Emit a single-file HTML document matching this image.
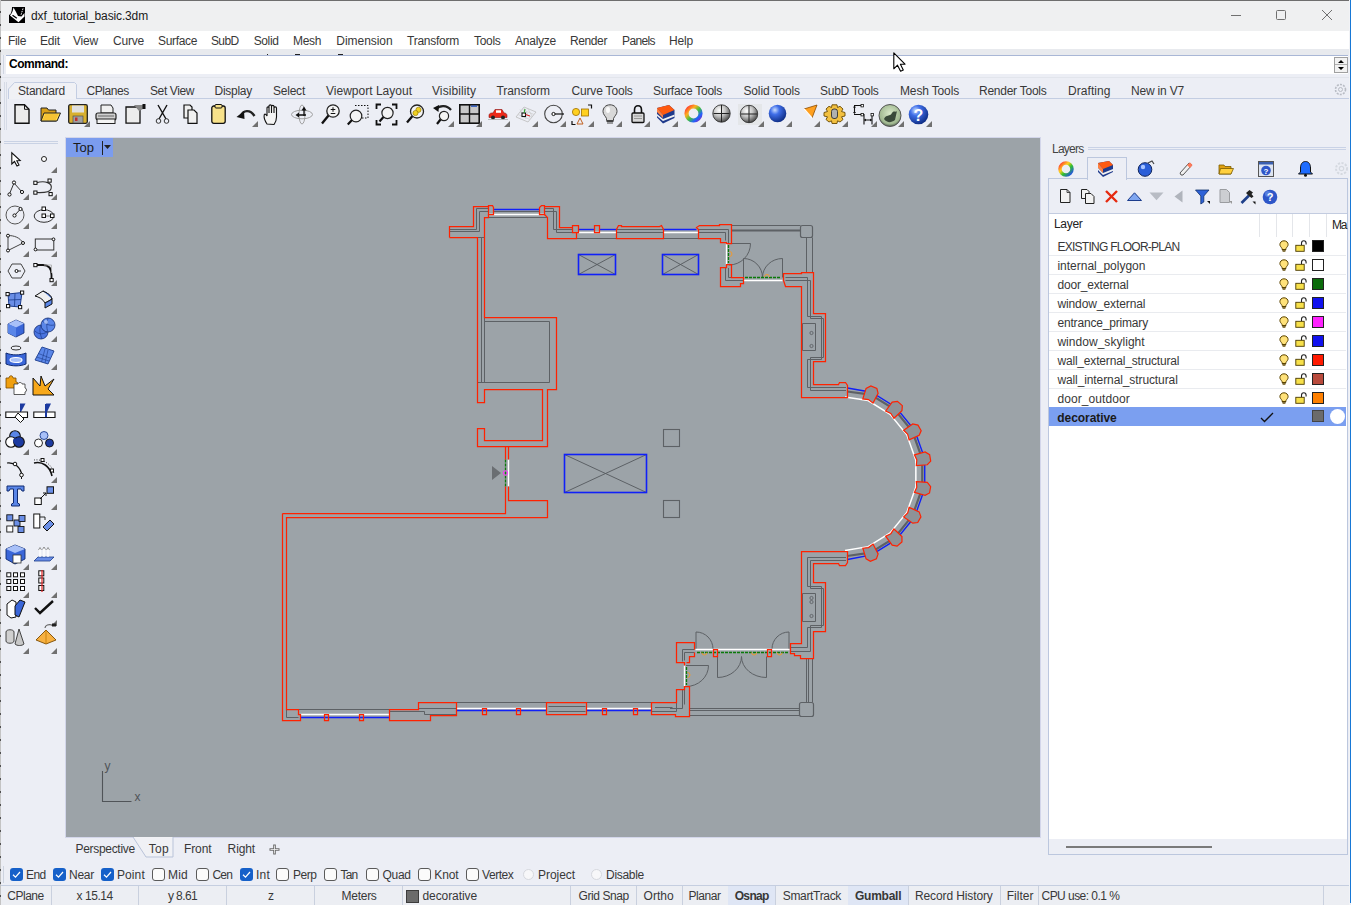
<!DOCTYPE html><html><head><meta charset="utf-8"><style>
html,body{margin:0;padding:0;width:1351px;height:905px;overflow:hidden;background:#eceef5;position:relative;font-family:"Liberation Sans",sans-serif;}
.t{position:absolute;white-space:nowrap;line-height:1;}
svg{overflow:visible}
</style></head><body>
<div style="position:absolute;left:0px;top:0px;width:1351px;height:905px;background:#eceef5;"></div>
<div style="position:absolute;left:0px;top:0px;width:1351px;height:31px;background:#eff0f1;"></div>
<div style="position:absolute;left:0px;top:0px;width:1351px;height:1px;background:#6e6e6e;"></div>
<div style="position:absolute;left:0px;top:0px;width:1px;height:905px;background:repeating-linear-gradient(to bottom,#c4c4c4 0px,#c4c4c4 11px,#505050 11px,#505050 13px);"></div>
<div style="position:absolute;left:1349px;top:0px;width:1px;height:905px;background:#f2f3f6;"></div>
<div style="position:absolute;left:1350px;top:0px;width:1px;height:903px;background:#1778d6;"></div>
<svg style="position:absolute;left:9px;top:7px;" width="16" height="16" viewBox="0 0 16 16"><path d="M3 0 H16 V16 H0 V8 L1.5 7 C2.5 5 3 2.5 3 0 Z" fill="#000"/><path d="M4.5 0.5 C6 3 7.5 6 9 9 L12.5 9.5 L15.5 6 V9.5 L9.5 15.2 L1 8.5 L2.5 6.5 C3.5 5 4 3 4.5 0.5 Z" fill="#fff"/><path d="M3.5 8.3 L7.8 11.3" stroke="#000" stroke-width="1.3"/><path d="M14 1.5 L12 8" stroke="#fff" stroke-width="1" stroke-dasharray="1.5 1"/></svg>
<div class="t" style="left:31px;top:9.84px;font-size:12px;letter-spacing:-0.139px;color:#1a1a1a;">dxf_tutorial_basic.3dm</div>
<div style="position:absolute;left:1231px;top:15px;width:10px;height:1px;background:#707070;"></div>
<div style="position:absolute;left:1276px;top:10px;width:10px;height:10px;border:1px solid #707070;box-sizing:border-box;border-radius:1.5px;"></div>
<svg style="position:absolute;left:1321px;top:9px;" width="12" height="12" viewBox="0 0 12 12"><path d="M1 1 L11 11 M11 1 L1 11" stroke="#707070" stroke-width="1"/></svg>
<div style="position:absolute;left:1px;top:31px;width:1348px;height:18px;background:#ffffff;"></div>
<div class="t" style="left:8px;top:34.84px;font-size:12px;letter-spacing:-0.334px;color:#383838;">File</div>
<div class="t" style="left:40px;top:34.84px;font-size:12px;letter-spacing:-0.169px;color:#383838;">Edit</div>
<div class="t" style="left:73px;top:34.84px;font-size:12px;letter-spacing:-0.198px;color:#383838;">View</div>
<div class="t" style="left:113px;top:34.84px;font-size:12px;letter-spacing:-0.202px;color:#383838;">Curve</div>
<div class="t" style="left:158px;top:34.84px;font-size:12px;letter-spacing:-0.337px;color:#383838;">Surface</div>
<div class="t" style="left:211px;top:34.84px;font-size:12px;letter-spacing:-0.629px;color:#383838;">SubD</div>
<div class="t" style="left:253.7px;top:34.84px;font-size:12px;letter-spacing:-0.377px;color:#383838;">Solid</div>
<div class="t" style="left:293px;top:34.84px;font-size:12px;letter-spacing:-0.336px;color:#383838;">Mesh</div>
<div class="t" style="left:336.3px;top:34.84px;font-size:12px;letter-spacing:-0.043px;color:#383838;">Dimension</div>
<div class="t" style="left:407px;top:34.84px;font-size:12px;letter-spacing:-0.248px;color:#383838;">Transform</div>
<div class="t" style="left:474px;top:34.84px;font-size:12px;letter-spacing:-0.303px;color:#383838;">Tools</div>
<div class="t" style="left:515px;top:34.84px;font-size:12px;letter-spacing:-0.242px;color:#383838;">Analyze</div>
<div class="t" style="left:570px;top:34.84px;font-size:12px;letter-spacing:-0.393px;color:#383838;">Render</div>
<div class="t" style="left:622px;top:34.84px;font-size:12px;letter-spacing:-0.615px;color:#383838;">Panels</div>
<div class="t" style="left:669px;top:34.84px;font-size:12px;letter-spacing:-0.170px;color:#383838;">Help</div>
<div style="position:absolute;left:1px;top:49px;width:1348px;height:6px;background:#e8eaee;"></div>
<div style="position:absolute;left:6px;top:55px;width:1342px;height:19px;background:#fff;border-top:1px solid #a9b7d6;box-sizing:border-box;"></div>
<div style="position:absolute;left:3px;top:55px;width:1px;height:19px;background:#d0d6e2;"></div>
<div class="t" style="left:9px;top:57.84px;font-size:12px;font-weight:bold;letter-spacing:-0.458px;color:#000;">Command:</div>
<div style="position:absolute;left:1334px;top:57px;width:14px;height:16px;background:#f2f2f2;border:1px solid #a0a0a0;box-sizing:border-box;"></div>
<div style="position:absolute;left:1335px;top:64px;width:12px;height:1px;background:#b0b0b0;"></div>
<svg style="position:absolute;left:1336px;top:58px;" width="10" height="14" viewBox="0 0 10 14"><path d="M2 5 L5 2 L8 5 Z M2 9 L5 12 L8 9 Z" fill="#000"/></svg>
<div style="position:absolute;left:1px;top:74px;width:1348px;height:64px;background:#eceef5;"></div>
<div style="position:absolute;left:75px;top:98px;width:1274px;height:1px;background:#c3cde2;"></div>
<svg style="position:absolute;left:0px;top:80px;" width="80" height="20" viewBox="0 0 80 20"><path d="M8.5,19 V9 L14.5,2.5 H74.5 L76.5,4.5 V19" fill="#f0f1f5" stroke="#c3cde2" stroke-width="1"/></svg>
<div style="position:absolute;left:4px;top:82px;width:1px;height:48px;background:#d6dbe6;"></div>
<div style="position:absolute;left:6px;top:82px;width:1px;height:48px;background:#d6dbe6;"></div>
<div style="position:absolute;left:1px;top:77px;width:1348px;height:1px;background:#e2e5ec;"></div>
<div class="t" style="left:18px;top:84.84px;font-size:12px;letter-spacing:-0.213px;color:#383838;">Standard</div>
<div class="t" style="left:86.6px;top:84.84px;font-size:12px;letter-spacing:-0.451px;color:#383838;">CPlanes</div>
<div class="t" style="left:150px;top:84.84px;font-size:12px;letter-spacing:-0.392px;color:#383838;">Set View</div>
<div class="t" style="left:214.5px;top:84.84px;font-size:12px;letter-spacing:-0.264px;color:#383838;">Display</div>
<div class="t" style="left:273px;top:84.84px;font-size:12px;letter-spacing:-0.225px;color:#383838;">Select</div>
<div class="t" style="left:326px;top:84.84px;font-size:12px;letter-spacing:0.011px;color:#383838;">Viewport Layout</div>
<div class="t" style="left:432px;top:84.84px;font-size:12px;letter-spacing:0.087px;color:#383838;">Visibility</div>
<div class="t" style="left:496.5px;top:84.84px;font-size:12px;letter-spacing:-0.081px;color:#383838;">Transform</div>
<div class="t" style="left:571.6px;top:84.84px;font-size:12px;letter-spacing:-0.186px;color:#383838;">Curve Tools</div>
<div class="t" style="left:653px;top:84.84px;font-size:12px;letter-spacing:-0.268px;color:#383838;">Surface Tools</div>
<div class="t" style="left:743.4px;top:84.84px;font-size:12px;letter-spacing:-0.110px;color:#383838;">Solid Tools</div>
<div class="t" style="left:820px;top:84.84px;font-size:12px;letter-spacing:-0.255px;color:#383838;">SubD Tools</div>
<div class="t" style="left:900px;top:84.84px;font-size:12px;letter-spacing:-0.147px;color:#383838;">Mesh Tools</div>
<div class="t" style="left:979px;top:84.84px;font-size:12px;letter-spacing:-0.249px;color:#383838;">Render Tools</div>
<div class="t" style="left:1068px;top:84.84px;font-size:12px;letter-spacing:0.060px;color:#383838;">Drafting</div>
<div class="t" style="left:1131px;top:84.84px;font-size:12px;letter-spacing:-0.188px;color:#383838;">New in V7</div>
<svg style="position:absolute;left:1333px;top:82px;" width="15" height="15" viewBox="0 0 15 15"><circle cx="7.5" cy="7.5" r="5" fill="none" stroke="#b8bcc4" stroke-width="1.6" stroke-dasharray="2 1.2"/><circle cx="7.5" cy="7.5" r="2" fill="none" stroke="#b8bcc4" stroke-width="1"/></svg>
<div style="position:absolute;left:65px;top:137px;width:976px;height:701px;background:#d3d6ea;"></div>
<div style="position:absolute;left:66px;top:138px;width:974px;height:699px;background:#9ca3a8;"></div>
<div style="position:absolute;left:66px;top:138px;width:47px;height:19px;background:#7b9cee;"></div>
<div class="t" style="left:73px;top:141.00px;font-size:13px;letter-spacing:0.013px;color:#1a1a1a;">Top</div>
<div style="position:absolute;left:102px;top:141px;width:1px;height:14px;background:#222;"></div>
<svg style="position:absolute;left:104px;top:145px;" width="8" height="6" viewBox="0 0 8 6"><path d="M0 0 L7 0 L3.5 4 Z" fill="#222"/></svg>
<svg style="position:absolute;left:130px;top:837px" width="46" height="22" viewBox="0 0 46 22"><path d="M3 0 L16 20 L43 20 L43 0" fill="#f0f1f5" stroke="#b9c3d9" stroke-width="1"/></svg>
<div class="t" style="left:75.5px;top:842.84px;font-size:12px;letter-spacing:-0.309px;color:#383838;">Perspective</div>
<div class="t" style="left:148.8px;top:842.84px;font-size:12px;letter-spacing:0.217px;color:#383838;">Top</div>
<div class="t" style="left:184px;top:842.84px;font-size:12px;letter-spacing:-0.122px;color:#383838;">Front</div>
<div class="t" style="left:227.6px;top:842.84px;font-size:12px;letter-spacing:-0.123px;color:#383838;">Right</div>
<svg style="position:absolute;left:269px;top:843.5px;" width="11" height="11" viewBox="0 0 11 11"><path d="M5.5 0.5 V10.5 M0.5 5.5 H10.5" stroke="#6a6a6a" stroke-width="2.6"/><path d="M5.5 1.5 V9.5 M1.5 5.5 H9.5" stroke="#f4f4f4" stroke-width="0.8"/></svg>
<div style="position:absolute;left:3px;top:866px;width:1px;height:17px;background:#cdd3df;"></div>
<div style="position:absolute;left:10px;top:868px;width:13px;height:13px;background:#1560c9;border-radius:3px;"></div>
<svg style="position:absolute;left:10px;top:868px;" width="13" height="13" viewBox="0 0 13 13"><path d="M3 6.8 L5.5 9.2 L10 4" fill="none" stroke="#fff" stroke-width="1.2"/></svg>
<div class="t" style="left:26px;top:868.84px;font-size:12px;letter-spacing:-0.617px;color:#383838;">End</div>
<div style="position:absolute;left:53px;top:868px;width:13px;height:13px;background:#1560c9;border-radius:3px;"></div>
<svg style="position:absolute;left:53px;top:868px;" width="13" height="13" viewBox="0 0 13 13"><path d="M3 6.8 L5.5 9.2 L10 4" fill="none" stroke="#fff" stroke-width="1.2"/></svg>
<div class="t" style="left:69px;top:868.84px;font-size:12px;letter-spacing:-0.253px;color:#383838;">Near</div>
<div style="position:absolute;left:101px;top:868px;width:13px;height:13px;background:#1560c9;border-radius:3px;"></div>
<svg style="position:absolute;left:101px;top:868px;" width="13" height="13" viewBox="0 0 13 13"><path d="M3 6.8 L5.5 9.2 L10 4" fill="none" stroke="#fff" stroke-width="1.2"/></svg>
<div class="t" style="left:117px;top:868.84px;font-size:12px;letter-spacing:0.090px;color:#383838;">Point</div>
<div style="position:absolute;left:152px;top:868px;width:13px;height:13px;background:#fbfbfb;border:1px solid #5a5a5a;border-radius:3px;box-sizing:border-box;"></div>
<div class="t" style="left:168px;top:868.84px;font-size:12px;letter-spacing:0.221px;color:#383838;">Mid</div>
<div style="position:absolute;left:196px;top:868px;width:13px;height:13px;background:#fbfbfb;border:1px solid #5a5a5a;border-radius:3px;box-sizing:border-box;"></div>
<div class="t" style="left:212.5px;top:868.84px;font-size:12px;letter-spacing:-0.838px;color:#383838;">Cen</div>
<div style="position:absolute;left:240px;top:868px;width:13px;height:13px;background:#1560c9;border-radius:3px;"></div>
<svg style="position:absolute;left:240px;top:868px;" width="13" height="13" viewBox="0 0 13 13"><path d="M3 6.8 L5.5 9.2 L10 4" fill="none" stroke="#fff" stroke-width="1.2"/></svg>
<div class="t" style="left:256px;top:868.84px;font-size:12px;letter-spacing:0.219px;color:#383838;">Int</div>
<div style="position:absolute;left:276px;top:868px;width:13px;height:13px;background:#fbfbfb;border:1px solid #5a5a5a;border-radius:3px;box-sizing:border-box;"></div>
<div class="t" style="left:293px;top:868.84px;font-size:12px;letter-spacing:-0.462px;color:#383838;">Perp</div>
<div style="position:absolute;left:324px;top:868px;width:13px;height:13px;background:#fbfbfb;border:1px solid #5a5a5a;border-radius:3px;box-sizing:border-box;"></div>
<div class="t" style="left:340.5px;top:868.84px;font-size:12px;letter-spacing:-0.849px;color:#383838;">Tan</div>
<div style="position:absolute;left:366px;top:868px;width:13px;height:13px;background:#fbfbfb;border:1px solid #5a5a5a;border-radius:3px;box-sizing:border-box;"></div>
<div class="t" style="left:382.5px;top:868.84px;font-size:12px;letter-spacing:-0.314px;color:#383838;">Quad</div>
<div style="position:absolute;left:418px;top:868px;width:13px;height:13px;background:#fbfbfb;border:1px solid #5a5a5a;border-radius:3px;box-sizing:border-box;"></div>
<div class="t" style="left:434.3px;top:868.84px;font-size:12px;letter-spacing:-0.096px;color:#383838;">Knot</div>
<div style="position:absolute;left:466px;top:868px;width:13px;height:13px;background:#fbfbfb;border:1px solid #5a5a5a;border-radius:3px;box-sizing:border-box;"></div>
<div class="t" style="left:482px;top:868.84px;font-size:12px;letter-spacing:-0.437px;color:#383838;">Vertex</div>
<div style="position:absolute;left:523px;top:869px;width:11px;height:11px;background:#f7f7f9;border:1px solid #d6d8de;border-radius:50%;box-sizing:border-box;"></div>
<div class="t" style="left:538px;top:868.84px;font-size:12px;letter-spacing:-0.050px;color:#383838;">Project</div>
<div style="position:absolute;left:591px;top:869px;width:11px;height:11px;background:#f7f7f9;border:1px solid #d6d8de;border-radius:50%;box-sizing:border-box;"></div>
<div class="t" style="left:606px;top:868.84px;font-size:12px;letter-spacing:-0.289px;color:#383838;">Disable</div>
<div style="position:absolute;left:1px;top:885px;width:1348px;height:20px;background:#eceef3;border-top:1px solid #c5cee0;box-sizing:border-box;"></div>
<div style="position:absolute;left:51px;top:886px;width:1px;height:19px;background:#c9d0de;"></div>
<div style="position:absolute;left:138px;top:886px;width:1px;height:19px;background:#c9d0de;"></div>
<div style="position:absolute;left:226px;top:886px;width:1px;height:19px;background:#c9d0de;"></div>
<div style="position:absolute;left:314px;top:886px;width:1px;height:19px;background:#c9d0de;"></div>
<div style="position:absolute;left:402px;top:886px;width:1px;height:19px;background:#c9d0de;"></div>
<div style="position:absolute;left:570px;top:886px;width:1px;height:19px;background:#c9d0de;"></div>
<div style="position:absolute;left:636px;top:886px;width:1px;height:19px;background:#c9d0de;"></div>
<div style="position:absolute;left:682px;top:886px;width:1px;height:19px;background:#c9d0de;"></div>
<div style="position:absolute;left:728px;top:886px;width:1px;height:19px;background:#c9d0de;"></div>
<div style="position:absolute;left:775px;top:886px;width:1px;height:19px;background:#c9d0de;"></div>
<div style="position:absolute;left:848px;top:886px;width:1px;height:19px;background:#c9d0de;"></div>
<div style="position:absolute;left:908px;top:886px;width:1px;height:19px;background:#c9d0de;"></div>
<div style="position:absolute;left:1000px;top:886px;width:1px;height:19px;background:#c9d0de;"></div>
<div style="position:absolute;left:1038px;top:886px;width:1px;height:19px;background:#c9d0de;"></div>
<div style="position:absolute;left:1323px;top:886px;width:1px;height:19px;background:#c9d0de;"></div>
<div style="position:absolute;left:728px;top:886px;width:47px;height:19px;background:#dfe6f5;"></div>
<div style="position:absolute;left:848px;top:886px;width:60px;height:19px;background:#dfe6f5;"></div>
<div class="t" style="left:7.3px;top:889.84px;font-size:12px;letter-spacing:-0.493px;color:#383838;">CPlane</div>
<div class="t" style="left:76.6px;top:889.84px;font-size:12px;letter-spacing:-0.452px;color:#383838;">x 15.14</div>
<div class="t" style="left:168px;top:889.84px;font-size:12px;letter-spacing:-0.615px;color:#383838;">y 8.61</div>
<div class="t" style="left:268px;top:889.84px;font-size:12px;color:#383838;">z</div>
<div class="t" style="left:341.6px;top:889.84px;font-size:12px;letter-spacing:-0.279px;color:#383838;">Meters</div>
<div class="t" style="left:422.5px;top:889.84px;font-size:12px;letter-spacing:-0.087px;color:#383838;">decorative</div>
<div class="t" style="left:578.5px;top:889.84px;font-size:12px;letter-spacing:-0.414px;color:#383838;">Grid Snap</div>
<div class="t" style="left:643.6px;top:889.84px;font-size:12px;letter-spacing:0.018px;color:#383838;">Ortho</div>
<div class="t" style="left:688.5px;top:889.84px;font-size:12px;letter-spacing:-0.415px;color:#383838;">Planar</div>
<div class="t" style="left:734.7px;top:889.84px;font-size:12px;font-weight:bold;letter-spacing:-0.648px;color:#383838;">Osnap</div>
<div class="t" style="left:782.8px;top:889.84px;font-size:12px;letter-spacing:-0.336px;color:#383838;">SmartTrack</div>
<div class="t" style="left:855px;top:889.84px;font-size:12px;font-weight:bold;letter-spacing:-0.244px;color:#383838;">Gumball</div>
<div class="t" style="left:915px;top:889.84px;font-size:12px;letter-spacing:-0.118px;color:#383838;">Record History</div>
<div class="t" style="left:1006.8px;top:889.84px;font-size:12px;letter-spacing:-0.011px;color:#383838;">Filter</div>
<div class="t" style="left:1041.5px;top:889.84px;font-size:12px;letter-spacing:-0.541px;color:#383838;">CPU use: 0.1 %</div>
<div style="position:absolute;left:406px;top:890px;width:13px;height:13px;background:#6b6b6b;border:1px solid #3c3c3c;box-sizing:border-box;"></div>
<svg style="position:absolute;left:14px;top:104px;" width="16" height="20" viewBox="0 0 16 20"><path d="M1 0.8 H10.5 L15 5.3 V19.2 H1 Z" fill="#ececec" stroke="#111" stroke-width="1.4"/><path d="M10.5 0.8 V5.3 H15" fill="none" stroke="#111" stroke-width="1"/></svg>
<svg style="position:absolute;left:40px;top:106px;" width="21" height="16" viewBox="0 0 21 16"><path d="M1 2 H7 L8.5 4 H16 V15 H1 Z" fill="#d9a018" stroke="#222" stroke-width="1"/><path d="M4 7 H20.5 L17 15 H1 Z" fill="#ffd84a" stroke="#222" stroke-width="1"/><path d="M5 9 H18 M4 11 H17 M3 13 H16" stroke="#e8a818" stroke-width="0.8"/></svg>
<svg style="position:absolute;left:68px;top:104px;" width="20" height="20" viewBox="0 0 20 20"><rect x="0.7" y="0.7" width="18.6" height="18.6" rx="1.5" fill="#d8b030" stroke="#222" stroke-width="1.3"/><rect x="4" y="1.5" width="12" height="7" fill="#e0e0e0"/><rect x="5" y="12" width="10" height="7" fill="#a0a0a0" stroke="#444" stroke-width="0.6"/><rect x="7" y="13.5" width="2.5" height="3.5" fill="#c03030"/></svg>
<svg style="position:absolute;left:84px;top:121px" width="6" height="6" viewBox="0 0 6 6"><path d="M6 0 L6 6 L0 6 Z" fill="#707070"/></svg>
<svg style="position:absolute;left:95px;top:104px;" width="22" height="20" viewBox="0 0 22 20"><path d="M6 1 H16 L18 4 V9 H6 Z" fill="#f0f0f0" stroke="#222" stroke-width="1"/><rect x="1" y="9" width="20" height="7" rx="2" fill="#d0d0d0" stroke="#222" stroke-width="1.2"/><rect x="2" y="15" width="18" height="4.5" fill="#f4f4f4" stroke="#222" stroke-width="1"/><path d="M3 12 H19" stroke="#666" stroke-width="1"/></svg>
<svg style="position:absolute;left:125px;top:104px;" width="21" height="20" viewBox="0 0 21 20"><path d="M1 3 H12 L15 6 V19.2 H1 Z" fill="#ececec" stroke="#111" stroke-width="1.3"/><path d="M9 1 L18 1 L20 4 L14 7 Z" fill="#888"/><rect x="17.5" y="0" width="3" height="5" fill="#111"/></svg>
<svg style="position:absolute;left:155px;top:104px;" width="15" height="20" viewBox="0 0 15 20"><path d="M3 1 L11 15 M12 1 L4 15" stroke="#111" stroke-width="1.4"/><circle cx="3.5" cy="17" r="2.3" fill="none" stroke="#333" stroke-width="1"/><circle cx="11.5" cy="17" r="2.3" fill="none" stroke="#333" stroke-width="1"/></svg>
<svg style="position:absolute;left:183px;top:104px;" width="15" height="20" viewBox="0 0 15 20"><path d="M1 1 H7 L9 3 V14 H1 Z" fill="#f0f0f0" stroke="#111" stroke-width="1.2"/><path d="M5 6 H11 L14 9 V19.3 H5 Z" fill="#f0f0f0" stroke="#111" stroke-width="1.2"/></svg>
<svg style="position:absolute;left:211px;top:104px;" width="15" height="20" viewBox="0 0 15 20"><rect x="0.8" y="2" width="13.4" height="17.3" rx="2" fill="#f8e28a" stroke="#111" stroke-width="1.3"/><rect x="4" y="0.5" width="7" height="3.5" rx="1" fill="#f8e28a" stroke="#111" stroke-width="1"/></svg>
<svg style="position:absolute;left:236px;top:107px;" width="21" height="14" viewBox="0 0 21 14"><path d="M5 9 C7 3 14 2 18.5 9" fill="none" stroke="#222" stroke-width="2.4"/><path d="M0.5 10 L8 4 L8.5 12 Z" fill="#111"/></svg>
<svg style="position:absolute;left:252px;top:121px" width="6" height="6" viewBox="0 0 6 6"><path d="M6 0 L6 6 L0 6 Z" fill="#707070"/></svg>
<svg style="position:absolute;left:263px;top:104px;" width="19" height="21" viewBox="0 0 19 21"><path d="M4 20 C2 17 0.8 13 1.2 11 C1.6 9.5 3 10 4 12 V4 C4 2.5 6 2.5 6 4 V9 V2 C6 0.5 8.5 0.5 8.5 2 V9 V2.5 C8.5 1 11 1 11 2.5 V9 V4 C11 2.5 13.5 2.5 13.5 4 V13 C13.5 17 12 19 11 20.5 Z" fill="#f4f4f4" stroke="#111" stroke-width="1.1"/></svg>
<svg style="position:absolute;left:291px;top:104px;" width="22" height="21" viewBox="0 0 22 21"><ellipse cx="11" cy="10.5" rx="10.5" ry="4.3" fill="none" stroke="#999" stroke-width="0.9"/><ellipse cx="11" cy="10.5" rx="3" ry="9.5" fill="none" stroke="#999" stroke-width="0.9"/><path d="M13 4 L13 12 M8 11 L15 11" stroke="#111" stroke-width="1.3"/><path d="M10.5 6.5 L13 2.5 L15.5 6.5 Z M8 8.5 L4.5 11 L8 13.5 Z" fill="#111"/></svg>
<svg style="position:absolute;left:321px;top:104px;" width="19" height="21" viewBox="0 0 19 21"><circle cx="12" cy="7" r="6.2" fill="#f4f4f4" stroke="#222" stroke-width="1.3"/><path d="M7.5 11.5 L1 19.5" stroke="#111" stroke-width="2.3"/><path d="M12 3.2 V7.8 M9.7 5.5 H14.3 M9.7 9.5 H14.3" stroke="#111" stroke-width="1"/></svg>
<svg style="position:absolute;left:347px;top:104px;" width="22" height="21" viewBox="0 0 22 21"><path d="M8 1.5 H21 V14 H14" fill="none" stroke="#111" stroke-width="1" stroke-dasharray="1.5 1.5"/><circle cx="9" cy="12" r="5.8" fill="#f4f4f4" stroke="#222" stroke-width="1.2"/><path d="M5 16 L0.8 20.5" stroke="#111" stroke-width="2.2"/></svg>
<svg style="position:absolute;left:376px;top:104px;" width="21" height="21" viewBox="0 0 21 21"><path d="M0.5 5 V0.5 H5 M16 0.5 H20.5 V5 M20.5 16 V20.5 H16 M5 20.5 H0.5 V16" fill="none" stroke="#111" stroke-width="1.8"/><circle cx="11.5" cy="9" r="5.6" fill="#f4f4f4" stroke="#222" stroke-width="1.2"/><path d="M7.5 13 L3.5 17.5" stroke="#111" stroke-width="2.2"/></svg>
<svg style="position:absolute;left:406px;top:104px;" width="18" height="21" viewBox="0 0 18 21"><circle cx="11" cy="7.5" r="6.5" fill="#f4f4f4" stroke="#222" stroke-width="1.3"/><circle cx="12.5" cy="5.8" r="2.6" fill="#f0d020" stroke="#8a7000" stroke-width="0.6"/><circle cx="9.5" cy="9" r="2.6" fill="#f0d020" stroke="#8a7000" stroke-width="0.6"/><path d="M6.3 12.3 L1 18.5" stroke="#111" stroke-width="2.3"/></svg>
<svg style="position:absolute;left:432px;top:104px;" width="20" height="21" viewBox="0 0 20 21"><path d="M4 5 C8 1 15 1 19 6" fill="none" stroke="#222" stroke-width="2.2"/><path d="M1 4 L7 1 L6.5 8 Z" fill="#111"/><circle cx="12" cy="12" r="4.6" fill="#f4f4f4" stroke="#222" stroke-width="1.2"/><path d="M8.5 15.5 L5 20" stroke="#111" stroke-width="2.2"/></svg>
<svg style="position:absolute;left:448px;top:121px" width="6" height="6" viewBox="0 0 6 6"><path d="M6 0 L6 6 L0 6 Z" fill="#707070"/></svg>
<svg style="position:absolute;left:459px;top:104px;" width="21" height="20" viewBox="0 0 21 20"><rect x="0.8" y="0.8" width="19.4" height="18.4" fill="#c8c8c8" stroke="#111" stroke-width="1.6"/><path d="M10.5 1 V19 M1 10 H20" stroke="#111" stroke-width="1.4"/><rect x="12" y="1.5" width="6" height="1.3" fill="#2050c0"/></svg>
<svg style="position:absolute;left:476px;top:121px" width="6" height="6" viewBox="0 0 6 6"><path d="M6 0 L6 6 L0 6 Z" fill="#707070"/></svg>
<svg style="position:absolute;left:488px;top:108px;" width="20" height="12" viewBox="0 0 20 12"><path d="M1 8 C1 5 3 5 5 5 L7 1.5 H14 L16 5 C18 5 19 6 19 8 V9.5 H1 Z" fill="#ee2a1a" stroke="#8a1010" stroke-width="0.6"/><rect x="8" y="2.3" width="5" height="2.5" fill="#fff"/><circle cx="5" cy="9.5" r="2" fill="#222"/><circle cx="15" cy="9.5" r="2" fill="#222"/><path d="M0 11.5 H20" stroke="#aaa" stroke-width="0.8"/></svg>
<svg style="position:absolute;left:504px;top:121px" width="6" height="6" viewBox="0 0 6 6"><path d="M6 0 L6 6 L0 6 Z" fill="#707070"/></svg>
<svg style="position:absolute;left:515px;top:104px;" width="22" height="20" viewBox="0 0 22 20"><path d="M1 13 L9 3 L21 8 L13 18 Z" fill="none" stroke="#bbb" stroke-width="0.8"/><path d="M5 8 L17 13 M3 10.5 L15 15.5 M7 5.5 L19 10.5 M5 5.5 L11 15 M9 4 L15 14 M13 5 L17 12" stroke="#ccc" stroke-width="0.7"/><rect x="7" y="9" width="3.5" height="3.5" fill="#fff" stroke="#111" stroke-width="1.1"/><path d="M10.5 10.5 L15 12" stroke="#e02020" stroke-width="1"/><path d="M9 9 L10 5" stroke="#20a020" stroke-width="1"/></svg>
<svg style="position:absolute;left:532px;top:121px" width="6" height="6" viewBox="0 0 6 6"><path d="M6 0 L6 6 L0 6 Z" fill="#707070"/></svg>
<svg style="position:absolute;left:544px;top:104px;" width="21" height="20" viewBox="0 0 21 20"><circle cx="9.5" cy="10" r="8.8" fill="none" stroke="#444" stroke-width="1.1"/><circle cx="9.5" cy="10" r="1.6" fill="#fff" stroke="#111" stroke-width="1"/><path d="M11 10 H20" stroke="#111" stroke-width="1.2"/></svg>
<svg style="position:absolute;left:560px;top:121px" width="6" height="6" viewBox="0 0 6 6"><path d="M6 0 L6 6 L0 6 Z" fill="#707070"/></svg>
<svg style="position:absolute;left:571px;top:104px;" width="22" height="22" viewBox="0 0 22 22"><circle cx="5" cy="8" r="3.6" fill="#ffd020" stroke="#a07000" stroke-width="0.8"/><rect x="10.5" y="5" width="7" height="7" fill="#ffd020" stroke="#a07000" stroke-width="0.8"/><path d="M6 20 L9 14 L12 20 Z" fill="none" stroke="#c06020" stroke-width="1"/><path d="M17 1 H20.5 V4.5 M1 17 V20.5 H4.5" fill="none" stroke="#111" stroke-width="1.2"/></svg>
<svg style="position:absolute;left:588px;top:121px" width="6" height="6" viewBox="0 0 6 6"><path d="M6 0 L6 6 L0 6 Z" fill="#707070"/></svg>
<svg style="position:absolute;left:602px;top:104px;" width="16" height="21" viewBox="0 0 16 21"><path d="M8 0.8 C3.5 0.8 1 4 1 7.5 C1 10.5 3.5 12 4.5 14.5 V16.5 H11.5 V14.5 C12.5 12 15 10.5 15 7.5 C15 4 12.5 0.8 8 0.8 Z" fill="#d8d8d8" stroke="#444" stroke-width="1"/><path d="M4.5 17.5 H11.5 M5 19 H11" stroke="#444" stroke-width="1.2"/><ellipse cx="6" cy="6" rx="2" ry="3" fill="#fafafa"/></svg>
<svg style="position:absolute;left:616px;top:121px" width="6" height="6" viewBox="0 0 6 6"><path d="M6 0 L6 6 L0 6 Z" fill="#707070"/></svg>
<svg style="position:absolute;left:631px;top:105px;" width="14" height="18" viewBox="0 0 14 18"><path d="M3.5 8 V5 C3.5 2 5 0.8 7 0.8 C9 0.8 10.5 2 10.5 5 V8" fill="none" stroke="#111" stroke-width="1.6"/><rect x="1" y="8" width="12" height="9.5" rx="1" fill="#d8d8d8" stroke="#111" stroke-width="1.3"/><path d="M3 11 H11 M3 13.5 H11" stroke="#888" stroke-width="0.8"/></svg>
<svg style="position:absolute;left:644px;top:121px" width="6" height="6" viewBox="0 0 6 6"><path d="M6 0 L6 6 L0 6 Z" fill="#707070"/></svg>
<svg style="position:absolute;left:656px;top:104px;" width="19" height="20" viewBox="0 0 19 20"><path d="M1 4 L13 1 L18.5 6 L18.5 14 L7 19.5 L1 13.5 Z" fill="#1f3a8c"/><path d="M1 4 L13 1 L18.5 6 L7 11 Z" fill="#ff5a10"/><path d="M1 4 L7 11 L7 14 L1 8 Z" fill="#ff8040"/><path d="M1 10 L7 15 L18.5 10.5 L18.5 12.5 L7 17 L1 12 Z" fill="#f0f0f0"/></svg>
<svg style="position:absolute;left:672px;top:121px" width="6" height="6" viewBox="0 0 6 6"><path d="M6 0 L6 6 L0 6 Z" fill="#707070"/></svg>
<svg style="position:absolute;left:684px;top:104px;" width="19" height="19" viewBox="0 0 19 19"><circle cx="9.5" cy="9.5" r="7" fill="none" stroke="url(#cw2)" stroke-width="4.2"/><defs><linearGradient id="cw2" x1="0" y1="0" x2="1" y2="1"><stop offset="0" stop-color="#ff3030"/><stop offset="0.3" stop-color="#ffb020"/><stop offset="0.55" stop-color="#40c040"/><stop offset="0.8" stop-color="#2060ff"/><stop offset="1" stop-color="#8030c0"/></linearGradient></defs></svg>
<svg style="position:absolute;left:700px;top:121px" width="6" height="6" viewBox="0 0 6 6"><path d="M6 0 L6 6 L0 6 Z" fill="#707070"/></svg>
<svg style="position:absolute;left:712px;top:104px;" width="19" height="19" viewBox="0 0 19 19"><defs><radialGradient id="sg" cx="0.38" cy="0.32" r="0.75"><stop offset="0" stop-color="#ffffff"/><stop offset="0.45" stop-color="#c4c4c4"/><stop offset="1" stop-color="#3a3a3a"/></radialGradient><radialGradient id="bg" cx="0.35" cy="0.3" r="0.75"><stop offset="0" stop-color="#c8dcff"/><stop offset="0.35" stop-color="#3f6ee8"/><stop offset="1" stop-color="#0c2a80"/></radialGradient></defs><circle cx="9.5" cy="9.5" r="8.7" fill="url(#sg)" stroke="#333" stroke-width="0.9"/><path d="M1.5 9.5 H17.5 M9.5 1 V18" fill="none" stroke="#222" stroke-width="1"/></svg>
<svg style="position:absolute;left:738px;top:104px;" width="24" height="21" viewBox="0 0 24 21"><rect x="0" y="0" width="24" height="21" fill="#dcdcdc" opacity="0.45"/><circle cx="11" cy="10" r="8.7" fill="url(#sg)" stroke="#333" stroke-width="0.9"/><path d="M3 10 H19 M11 1.5 V18.5" fill="none" stroke="#222" stroke-width="1"/></svg>
<svg style="position:absolute;left:758px;top:121px" width="6" height="6" viewBox="0 0 6 6"><path d="M6 0 L6 6 L0 6 Z" fill="#707070"/></svg>
<svg style="position:absolute;left:768px;top:104px;" width="19" height="19" viewBox="0 0 19 19"><circle cx="9.5" cy="9.5" r="8.8" fill="url(#bg)"/></svg>
<svg style="position:absolute;left:786px;top:121px" width="6" height="6" viewBox="0 0 6 6"><path d="M6 0 L6 6 L0 6 Z" fill="#707070"/></svg>
<svg style="position:absolute;left:803px;top:104px;" width="15" height="15" viewBox="0 0 15 15"><path d="M1 5 L14 1 L9 14 Z" fill="#ffa020" stroke="#8a4a00" stroke-width="0.8"/><path d="M1 5 L9 14" stroke="#fff" stroke-width="1.4"/></svg>
<svg style="position:absolute;left:814px;top:121px" width="6" height="6" viewBox="0 0 6 6"><path d="M6 0 L6 6 L0 6 Z" fill="#707070"/></svg>
<svg style="position:absolute;left:823px;top:104px;" width="23" height="20" viewBox="0 0 23 20"><path d="M9 0.8 H14 L14.5 3.5 L17 2.3 L20 5 L18.5 7.5 L22 8.5 V12 L18.5 12.8 L20 15.5 L17 18 L14.5 16.8 L14 19.5 H9 L8.5 16.8 L6 18 L3 15.5 L4.5 12.8 L1 12 V8.5 L4.5 7.5 L3 5 L6 2.3 L8.5 3.5 Z" fill="#f2c040" stroke="#6a4a00" stroke-width="0.9"/><rect x="8.5" y="5" width="6" height="9.5" rx="2.5" fill="#b0b0b0" stroke="#333" stroke-width="0.9"/></svg>
<svg style="position:absolute;left:842px;top:121px" width="6" height="6" viewBox="0 0 6 6"><path d="M6 0 L6 6 L0 6 Z" fill="#707070"/></svg>
<svg style="position:absolute;left:851px;top:104px;" width="24" height="22" viewBox="0 0 24 22"><path d="M3 1.5 H10 M3 10.5 H10 M3.5 3 V9 M10 10.5 H13 V20.5 M13 16 H21 M21 10.5 V20.5" fill="none" stroke="#111" stroke-width="1.1"/><path d="M2 3.5 L3.5 1.5 L5 3.5 Z M2 8 L3.5 10 L5 8 Z M15 14.5 L13.5 16 L15 17.5 Z M19 14.5 L20.5 16 L19 17.5 Z" fill="#111"/><rect x="10" y="0.5" width="2.4" height="2.4" fill="#fff" stroke="#111" stroke-width="0.8"/><rect x="10" y="9.5" width="2.4" height="2.4" fill="#fff" stroke="#111" stroke-width="0.8"/><rect x="20" y="9.5" width="2.4" height="2.4" fill="#fff" stroke="#111" stroke-width="0.8"/></svg>
<svg style="position:absolute;left:871px;top:121px" width="6" height="6" viewBox="0 0 6 6"><path d="M6 0 L6 6 L0 6 Z" fill="#707070"/></svg>
<svg style="position:absolute;left:878px;top:104px;" width="24" height="24" viewBox="0 0 24 24"><defs><radialGradient id="gg" cx="0.5" cy="0.4" r="0.6"><stop offset="0" stop-color="#d8e8c8"/><stop offset="0.8" stop-color="#a0b890"/><stop offset="1" stop-color="#506050"/></radialGradient></defs><circle cx="12" cy="11.5" r="11" fill="url(#gg)" stroke="#555" stroke-width="1"/><path d="M6 15 C8 10 12 13 14 9 C16 6 18 9 19 7 L17 16 C13 19 9 19 6 15 Z" fill="#3a4a3a"/></svg>
<svg style="position:absolute;left:898px;top:121px" width="6" height="6" viewBox="0 0 6 6"><path d="M6 0 L6 6 L0 6 Z" fill="#707070"/></svg>
<svg style="position:absolute;left:908px;top:104px;" width="21" height="21" viewBox="0 0 21 21"><circle cx="10.5" cy="10.5" r="9.8" fill="url(#bg)"/><text x="10.5" y="16.8" font-size="16" font-weight="bold" text-anchor="middle" fill="#fff" font-family="Liberation Sans">?</text></svg>
<svg style="position:absolute;left:926px;top:121px" width="6" height="6" viewBox="0 0 6 6"><path d="M6 0 L6 6 L0 6 Z" fill="#707070"/></svg>
<div style="position:absolute;left:4px;top:141px;width:54px;height:1px;background:#c9d2e4;"></div>
<div style="position:absolute;left:4px;top:143px;width:54px;height:1px;background:#c9d2e4;"></div>
<svg style="position:absolute;left:11px;top:152px;" width="10" height="15" viewBox="0 0 10 15"><path d="M0.8 0.8 L0.8 12 L3.5 9.5 L6 14 L8 13 L5.8 8.8 L9.2 8.5 Z" fill="#fff" stroke="#111" stroke-width="1.1"/></svg>
<svg style="position:absolute;left:40px;top:155px;" width="8" height="8" viewBox="0 0 8 8"><circle cx="4" cy="4" r="2.5" fill="#fff" stroke="#222" stroke-width="1"/></svg>
<svg style="position:absolute;left:51px;top:167px" width="6" height="6" viewBox="0 0 6 6"><path d="M6 0 L6 6 L0 6 Z" fill="#707070"/></svg>
<svg style="position:absolute;left:7px;top:180px;" width="19" height="17" viewBox="0 0 19 17"><path d="M2 15 L7 3 L15 12" fill="none" stroke="#333" stroke-width="1"/><circle cx="2.5" cy="14.5" r="1.6" fill="#fff" stroke="#111"/><circle cx="7" cy="2.5" r="1.6" fill="#fff" stroke="#111"/><circle cx="15" cy="12" r="1.6" fill="#fff" stroke="#111"/></svg>
<svg style="position:absolute;left:23px;top:194px" width="6" height="6" viewBox="0 0 6 6"><path d="M6 0 L6 6 L0 6 Z" fill="#707070"/></svg>
<svg style="position:absolute;left:33px;top:178px;" width="21" height="20" viewBox="0 0 21 20"><path d="M3 5 C12 2 20 5 18 11 C17 14 12 15 3 14.5" fill="none" stroke="#333" stroke-width="1.1"/><rect x="0.8" y="3.2" width="3.2" height="3.2" fill="#fff" stroke="#111" stroke-width="1"/><rect x="15" y="1" width="3.2" height="3.2" fill="#fff" stroke="#111" stroke-width="1"/><rect x="0.8" y="13" width="3.2" height="3.2" fill="#fff" stroke="#111" stroke-width="1"/><rect x="16" y="14.5" width="3.2" height="3.2" fill="#fff" stroke="#111" stroke-width="1"/></svg>
<svg style="position:absolute;left:51px;top:194px" width="6" height="6" viewBox="0 0 6 6"><path d="M6 0 L6 6 L0 6 Z" fill="#707070"/></svg>
<svg style="position:absolute;left:5px;top:205px;" width="22" height="20" viewBox="0 0 22 20"><circle cx="10" cy="10" r="9" fill="none" stroke="#555" stroke-width="1"/><path d="M9.5 10.5 L15.5 4" stroke="#222" stroke-width="1"/><circle cx="9.5" cy="10.5" r="1.6" fill="#fff" stroke="#111"/><circle cx="15.5" cy="4" r="1.6" fill="#fff" stroke="#111"/></svg>
<svg style="position:absolute;left:23px;top:223px" width="6" height="6" viewBox="0 0 6 6"><path d="M6 0 L6 6 L0 6 Z" fill="#707070"/></svg>
<svg style="position:absolute;left:33px;top:206px;" width="22" height="19" viewBox="0 0 22 19"><ellipse cx="11" cy="10" rx="9.8" ry="6.3" fill="none" stroke="#333" stroke-width="1"/><path d="M11 10 H19" stroke="#555" stroke-width="0.8"/><rect x="9" y="1" width="3.5" height="3.5" fill="#fff" stroke="#111"/><rect x="9" y="8" width="3.5" height="3.5" fill="#fff" stroke="#111"/><rect x="17.5" y="8" width="3.5" height="3.5" fill="#fff" stroke="#111"/></svg>
<svg style="position:absolute;left:51px;top:223px" width="6" height="6" viewBox="0 0 6 6"><path d="M6 0 L6 6 L0 6 Z" fill="#707070"/></svg>
<svg style="position:absolute;left:6px;top:234px;" width="21" height="20" viewBox="0 0 21 20"><path d="M2 1.5 L2 16.5 L17 9 C14 3.5 8 1.5 2 1.5" fill="none" stroke="#444" stroke-width="1"/><circle cx="2" cy="1.7" r="1.5" fill="#fff" stroke="#111"/><circle cx="2" cy="16.5" r="1.5" fill="#fff" stroke="#111"/><circle cx="17" cy="9" r="1.5" fill="#fff" stroke="#111"/></svg>
<svg style="position:absolute;left:23px;top:251px" width="6" height="6" viewBox="0 0 6 6"><path d="M6 0 L6 6 L0 6 Z" fill="#707070"/></svg>
<svg style="position:absolute;left:34px;top:238px;" width="21" height="13" viewBox="0 0 21 13"><rect x="1.3" y="1" width="18.5" height="11" fill="none" stroke="#333" stroke-width="1"/><circle cx="1.5" cy="11.5" r="1.4" fill="#fff" stroke="#111"/><circle cx="19.5" cy="1.3" r="1.4" fill="#fff" stroke="#111"/></svg>
<svg style="position:absolute;left:51px;top:251px" width="6" height="6" viewBox="0 0 6 6"><path d="M6 0 L6 6 L0 6 Z" fill="#707070"/></svg>
<svg style="position:absolute;left:7px;top:263px;" width="19" height="16" viewBox="0 0 19 16"><path d="M1 8 L5 1 H14 L18 8 L14 15 H5 Z" fill="none" stroke="#444" stroke-width="1"/><path d="M9.5 8 H14" stroke="#333" stroke-width="1"/><circle cx="9.5" cy="8" r="1.5" fill="#fff" stroke="#111"/></svg>
<svg style="position:absolute;left:23px;top:280px" width="6" height="6" viewBox="0 0 6 6"><path d="M6 0 L6 6 L0 6 Z" fill="#707070"/></svg>
<svg style="position:absolute;left:33px;top:263px;" width="22" height="20" viewBox="0 0 22 20"><path d="M2.5 2 H10 C16 2 18.5 6 18.5 12 V17" fill="none" stroke="#111" stroke-width="1.8"/><path d="M11 2 H18.5 V10" fill="none" stroke="#aaa" stroke-width="0.8"/><rect x="0.8" y="0.5" width="3.2" height="3.2" fill="#fff" stroke="#111"/><rect x="17" y="15.5" width="3.2" height="3.2" fill="#fff" stroke="#111"/></svg>
<svg style="position:absolute;left:51px;top:280px" width="6" height="6" viewBox="0 0 6 6"><path d="M6 0 L6 6 L0 6 Z" fill="#707070"/></svg>
<svg style="position:absolute;left:5px;top:290px;" width="22" height="20" viewBox="0 0 22 20"><path d="M3 4 L17 2.5 L15 17 L4 16 Z" fill="#6a8ee6" stroke="#1c3c8c" stroke-width="1"/><path d="M10 3 L9.5 16.5 M3.5 10 L16 9.5" stroke="#1c3c8c" stroke-width="0.8"/><rect x="1" y="2.5" width="3.2" height="3.2" fill="#fff" stroke="#111"/><rect x="15.5" y="1" width="3.2" height="3.2" fill="#fff" stroke="#111"/><rect x="1.5" y="14.5" width="3.2" height="3.2" fill="#fff" stroke="#111"/><rect x="13.5" y="15.5" width="3.2" height="3.2" fill="#fff" stroke="#111"/></svg>
<svg style="position:absolute;left:23px;top:308px" width="6" height="6" viewBox="0 0 6 6"><path d="M6 0 L6 6 L0 6 Z" fill="#707070"/></svg>
<svg style="position:absolute;left:34px;top:290px;" width="20" height="19" viewBox="0 0 20 19"><path d="M1 6 L9 1 C13 3 17 5 18 9 L11 13 C9 9 5 7 1 6 Z" fill="#f0f0f0" stroke="#111" stroke-width="1"/><path d="M9 1 C13 3 17 5 18 9 L18 14 L11 18 L11 13 C13 12 17 10 18 9" fill="#5a86e8" stroke="#111" stroke-width="1"/></svg>
<svg style="position:absolute;left:51px;top:308px" width="6" height="6" viewBox="0 0 6 6"><path d="M6 0 L6 6 L0 6 Z" fill="#707070"/></svg>
<svg style="position:absolute;left:7px;top:319px;" width="18" height="19" viewBox="0 0 18 19"><path d="M1 5 L9 1 L17 4.5 L17 14 L9 18 L1 14 Z" fill="#3a66d8" stroke="#102a70" stroke-width="0.8"/><path d="M1 5 L9 1 L17 4.5 L9 8.5 Z" fill="#a8c0f8"/><path d="M1 5 L9 8.5 L9 18 L1 14 Z" fill="#5a86e8"/></svg>
<svg style="position:absolute;left:23px;top:336px" width="6" height="6" viewBox="0 0 6 6"><path d="M6 0 L6 6 L0 6 Z" fill="#707070"/></svg>
<svg style="position:absolute;left:33px;top:317px;" width="23" height="23" viewBox="0 0 23 23"><circle cx="8" cy="15" r="7" fill="#4a74e0" stroke="#102a70" stroke-width="0.8"/><circle cx="15" cy="8" r="7" fill="#5a86e8" stroke="#102a70" stroke-width="0.8"/><path d="M9 4 C13 7 16 9 21 8 M15 1 C14 6 13 10 15 15 M2 14 C5 17 9 18 14 15 M8 8 C6 12 7 17 9 22" fill="none" stroke="#1c3c8c" stroke-width="0.7"/><circle cx="13" cy="5" r="2" fill="#c0d4ff" opacity="0.7"/></svg>
<svg style="position:absolute;left:51px;top:336px" width="6" height="6" viewBox="0 0 6 6"><path d="M6 0 L6 6 L0 6 Z" fill="#707070"/></svg>
<svg style="position:absolute;left:5px;top:345px;" width="22" height="22" viewBox="0 0 22 22"><ellipse cx="11" cy="3" rx="5" ry="2" fill="none" stroke="#333" stroke-width="1"/><path d="M1 8 C7 10.5 15 10.5 21 8 V19 C15 21.5 7 21.5 1 19 Z" fill="#3a66d8" stroke="#102a70" stroke-width="1"/><ellipse cx="11" cy="15" rx="6" ry="2.5" fill="#a8c0f8" stroke="#fff" stroke-width="1.2"/></svg>
<svg style="position:absolute;left:23px;top:364px" width="6" height="6" viewBox="0 0 6 6"><path d="M6 0 L6 6 L0 6 Z" fill="#707070"/></svg>
<svg style="position:absolute;left:34px;top:346px;" width="21" height="19" viewBox="0 0 21 19"><path d="M1 14 L8 1 L20 5 L14 18 Z" fill="#5a86e8" stroke="#1c3c8c" stroke-width="0.9"/><path d="M4.5 7.5 L16 12 M11 3 L7.5 16 M14 4 L11 17 M2.5 11 L15 15" stroke="#1c3c8c" stroke-width="0.6"/></svg>
<svg style="position:absolute;left:51px;top:364px" width="6" height="6" viewBox="0 0 6 6"><path d="M6 0 L6 6 L0 6 Z" fill="#707070"/></svg>
<svg style="position:absolute;left:5px;top:374px;" width="22" height="21" viewBox="0 0 22 21"><path d="M1 4 H4 C4 1 8 1 8 4 H11 V8 C14 8 14 12 11 12 V14 H1 Z" fill="#f0a010" stroke="#7a4a00" stroke-width="0.8"/><path d="M9 10 H13 C13 8 17 8 17 10 H20 V14 C22 14 22 18 20 18 V20.5 H9 Z" fill="#fff" stroke="#333" stroke-width="0.8"/></svg>
<svg style="position:absolute;left:32px;top:375px;" width="23" height="21" viewBox="0 0 23 21"><path d="M1 3 L8 11 L9 1 L13 11 L22 4 L16 14 L22 20 H1 Z" fill="#f7a81b" stroke="#111" stroke-width="1"/></svg>
<svg style="position:absolute;left:5px;top:403px;" width="23" height="18" viewBox="0 0 23 18"><path d="M15 0.5 H20.5 L16 9 H15 Z" fill="#1c3aa0"/><path d="M0.8 9 H22.5 V14.5 H0.8 Z" fill="#fff" stroke="#111" stroke-width="1.1"/><path d="M13 10 L19 16 L15.5 19.5 L10 14 Z" fill="#fff" stroke="#111" stroke-width="1"/></svg>
<svg style="position:absolute;left:33px;top:403px;" width="23" height="15" viewBox="0 0 23 15"><path d="M13 0.5 H18 L14 9 H13 Z" fill="#1c3aa0"/><path d="M0.8 9 H22 V14.5 H0.8 Z" fill="#fff" stroke="#111" stroke-width="1.1"/><path d="M13 1 V14" stroke="#1c3aa0" stroke-width="2"/></svg>
<svg style="position:absolute;left:5px;top:430px;" width="20" height="18" viewBox="0 0 20 18"><circle cx="10" cy="6" r="5.3" fill="#5a86e8" stroke="#111" stroke-width="1.1"/><circle cx="6" cy="12" r="5.3" fill="#fff" stroke="#111" stroke-width="1.1"/><circle cx="14" cy="12" r="5.3" fill="#1c3aa0" stroke="#111" stroke-width="1.1"/><path d="M10 8 C8 9 7 11 10 14 C13 11 12 9 10 8 Z" fill="#1c3aa0"/></svg>
<svg style="position:absolute;left:23px;top:449px" width="6" height="6" viewBox="0 0 6 6"><path d="M6 0 L6 6 L0 6 Z" fill="#707070"/></svg>
<svg style="position:absolute;left:34px;top:431px;" width="20" height="17" viewBox="0 0 20 17"><circle cx="10" cy="4.5" r="4" fill="#a8c0f8" stroke="#1c3c8c" stroke-width="0.9"/><circle cx="4.5" cy="12" r="4" fill="#fff" stroke="#111" stroke-width="0.9"/><circle cx="15.5" cy="12" r="4" fill="#1c3aa0" stroke="#111" stroke-width="0.9"/></svg>
<svg style="position:absolute;left:51px;top:449px" width="6" height="6" viewBox="0 0 6 6"><path d="M6 0 L6 6 L0 6 Z" fill="#707070"/></svg>
<svg style="position:absolute;left:5px;top:460px;" width="20" height="19" viewBox="0 0 20 19"><path d="M2 3 C9 2 16 7 17 16" fill="none" stroke="#111" stroke-width="1.2"/><circle cx="10" cy="4" r="1.8" fill="#fff" stroke="#111"/><circle cx="16.5" cy="15" r="1.8" fill="#fff" stroke="#111"/><path d="M16.5 17 V19" stroke="#111"/></svg>
<svg style="position:absolute;left:33px;top:458px;" width="22" height="22" viewBox="0 0 22 22"><path d="M1 5 C9 3 17 8 19 18" fill="none" stroke="#111" stroke-width="1.6"/><path d="M1 2 C9 1 19 5 21 16" fill="none" stroke="#111" stroke-width="0.8" stroke-dasharray="1 1.5"/><rect x="8" y="0.5" width="3" height="3" fill="#fff" stroke="#111"/><rect x="17.5" y="11" width="3" height="3" fill="#fff" stroke="#111"/></svg>
<svg style="position:absolute;left:51px;top:477px" width="6" height="6" viewBox="0 0 6 6"><path d="M6 0 L6 6 L0 6 Z" fill="#707070"/></svg>
<svg style="position:absolute;left:6px;top:485px;" width="19" height="22" viewBox="0 0 19 22"><path d="M1 1 H18 V6 H16 L15 4 H11.5 V18 L13.5 19 V21 H5.5 V19 L7.5 18 V4 H4 L3 6 H1 Z" fill="#5a86e8" stroke="#102a70" stroke-width="1"/></svg>
<svg style="position:absolute;left:34px;top:486px;" width="21" height="20" viewBox="0 0 21 20"><rect x="0.8" y="12" width="6.5" height="6.5" fill="#fff" stroke="#111" stroke-width="1"/><rect x="13" y="0.8" width="6.5" height="6.5" fill="#6a8ee6" stroke="#111" stroke-width="1"/><path d="M6 13 L12 7 M9 7 H12 V10" fill="none" stroke="#111" stroke-width="1"/></svg>
<svg style="position:absolute;left:51px;top:504px" width="6" height="6" viewBox="0 0 6 6"><path d="M6 0 L6 6 L0 6 Z" fill="#707070"/></svg>
<svg style="position:absolute;left:6px;top:514px;" width="20" height="20" viewBox="0 0 20 20"><rect x="0.8" y="0.8" width="6" height="6" fill="#6a8ee6" stroke="#111" stroke-width="0.9"/><rect x="8" y="6" width="6" height="6" fill="#6a8ee6" stroke="#111" stroke-width="0.9"/><rect x="13" y="1.5" width="6" height="6" fill="#6a8ee6" stroke="#111" stroke-width="0.9"/><rect x="0.8" y="12" width="6" height="6" fill="#fff" stroke="#111" stroke-width="0.9"/><rect x="12" y="12.5" width="6" height="6" fill="#6a8ee6" stroke="#111" stroke-width="0.9"/></svg>
<svg style="position:absolute;left:33px;top:513px;" width="22" height="21" viewBox="0 0 22 21"><rect x="0.8" y="1" width="6" height="14" fill="#fff" stroke="#111" stroke-width="1"/><path d="M10 14 L17 7 L21 11 L14 18 Z" fill="#6a8ee6" stroke="#111" stroke-width="1"/><path d="M7 4 H12 L12 7" fill="none" stroke="#111" stroke-width="0.9"/></svg>
<svg style="position:absolute;left:5px;top:544px;" width="21" height="22" viewBox="0 0 21 22"><path d="M1 5 L10 1 L20 5 V15 L10 20 L1 15 Z" fill="#3a66d8" stroke="#102a70" stroke-width="0.9"/><path d="M1 5 L10 1 L20 5 L10 9 Z" fill="#a8c0f8"/><rect x="8" y="11" width="8" height="8" fill="#fff" stroke="#333" stroke-width="0.8"/></svg>
<svg style="position:absolute;left:23px;top:564px" width="6" height="6" viewBox="0 0 6 6"><path d="M6 0 L6 6 L0 6 Z" fill="#707070"/></svg>
<svg style="position:absolute;left:33px;top:546px;" width="22" height="18" viewBox="0 0 22 18"><path d="M1 15 L5 11 H21 L17 15 Z" fill="#6a8ee6" stroke="#1c3c8c" stroke-width="0.8"/><path d="M7 11 V3 M11 11 V2 M15 11 V3" stroke="#fff" stroke-width="1.4"/><path d="M5.5 4 L7 1.5 L8.5 4 M9.5 3.5 L11 1 L12.5 3.5 M13.5 4 L15 1.5 L16.5 4" fill="#fff" stroke="#333" stroke-width="0.5"/></svg>
<svg style="position:absolute;left:51px;top:564px" width="6" height="6" viewBox="0 0 6 6"><path d="M6 0 L6 6 L0 6 Z" fill="#707070"/></svg>
<svg style="position:absolute;left:6px;top:572px;" width="20" height="20" viewBox="0 0 20 20"><g fill="#fff" stroke="#111" stroke-width="1"><rect x="0.8" y="0.8" width="4" height="4"/><rect x="7.5" y="0.8" width="4" height="4"/><rect x="14.5" y="0.8" width="4" height="4"/><rect x="0.8" y="7.5" width="4" height="4"/><rect x="7.5" y="7.5" width="4" height="4"/><rect x="14.5" y="7.5" width="4" height="4"/><rect x="0.8" y="14.5" width="4" height="4"/><rect x="7.5" y="14.5" width="4" height="4"/><rect x="14.5" y="14.5" width="4" height="4"/></g></svg>
<svg style="position:absolute;left:23px;top:592px" width="6" height="6" viewBox="0 0 6 6"><path d="M6 0 L6 6 L0 6 Z" fill="#707070"/></svg>
<svg style="position:absolute;left:38px;top:570px;" width="12" height="22" viewBox="0 0 12 22"><g fill="#fff" stroke="#111" stroke-width="1"><rect x="0.8" y="0.8" width="5" height="5"/><rect x="0.8" y="8" width="5" height="5"/><rect x="0.8" y="15.5" width="5" height="5"/></g><path d="M4 0 V22" stroke="#e02020" stroke-width="1.2"/></svg>
<svg style="position:absolute;left:51px;top:592px" width="6" height="6" viewBox="0 0 6 6"><path d="M6 0 L6 6 L0 6 Z" fill="#707070"/></svg>
<svg style="position:absolute;left:6px;top:598px;" width="20" height="21" viewBox="0 0 20 21"><path d="M1 6 L6 2 L10 4 V19 L5 20 L1 17 Z" fill="#fff" stroke="#111" stroke-width="1"/><path d="M9 8 L14 2 L19 4 L13 19 L9 17 Z" fill="#3a66d8" stroke="#111" stroke-width="1"/></svg>
<svg style="position:absolute;left:23px;top:620px" width="6" height="6" viewBox="0 0 6 6"><path d="M6 0 L6 6 L0 6 Z" fill="#707070"/></svg>
<svg style="position:absolute;left:34px;top:600px;" width="20" height="15" viewBox="0 0 20 15"><path d="M1 8 L6 13 L19 1" fill="none" stroke="#111" stroke-width="2.4"/></svg>
<svg style="position:absolute;left:51px;top:620px" width="6" height="6" viewBox="0 0 6 6"><path d="M6 0 L6 6 L0 6 Z" fill="#707070"/></svg>
<svg style="position:absolute;left:5px;top:626px;" width="22" height="20" viewBox="0 0 22 20"><path d="M1 6 C1 3 9 3 9 6 V15 C9 18 1 18 1 15 Z" fill="#d0d0d0" stroke="#333" stroke-width="0.9"/><path d="M10 18 L14 3 L19 18 C17 20 12 20 10 18 Z" fill="#c8c8c8" stroke="#333" stroke-width="0.9"/></svg>
<svg style="position:absolute;left:23px;top:648px" width="6" height="6" viewBox="0 0 6 6"><path d="M6 0 L6 6 L0 6 Z" fill="#707070"/></svg>
<svg style="position:absolute;left:35px;top:623px;" width="22" height="23" viewBox="0 0 22 23"><path d="M1 17 L11 7 L21 17 L11 21 Z" fill="#f7b040" stroke="#7a4a00" stroke-width="0.9"/><path d="M11 7 L11 21" stroke="#c07800" stroke-width="0.8"/><path d="M10 5 C10 2 14 1 17 2 H21" fill="none" stroke="#666" stroke-width="1.2"/><rect x="17" y="0.5" width="4" height="3" fill="#222"/></svg>
<svg style="position:absolute;left:51px;top:648px" width="6" height="6" viewBox="0 0 6 6"><path d="M6 0 L6 6 L0 6 Z" fill="#707070"/></svg>
<div class="t" style="left:1052px;top:142.84px;font-size:12px;letter-spacing:-0.753px;color:#444;">Layers</div>
<div style="position:absolute;left:1088px;top:147px;width:258px;height:1px;background:#c9d2e6;"></div>
<div style="position:absolute;left:1088px;top:149px;width:258px;height:1px;background:#c9d2e6;"></div>
<div style="position:absolute;left:1048px;top:178px;width:300px;height:677px;background:#eceef5;border:1px solid #bcc7de;box-sizing:border-box;"></div>
<div style="position:absolute;left:1087px;top:157px;width:40px;height:23px;background:#eceef5;border:1px solid #bcc7de;border-bottom:none;box-sizing:border-box;"></div>
<div style="position:absolute;left:1049px;top:213px;width:298px;height:626px;background:#ffffff;border-top:1px solid #c3cce0;box-sizing:border-box;"></div>
<div style="position:absolute;left:1066px;top:846px;width:146px;height:2px;background:#7a7a7a;"></div>
<div class="t" style="left:1054px;top:217.84px;font-size:12px;letter-spacing:-0.304px;color:#222;">Layer</div>
<div style="position:absolute;left:1259px;top:214px;width:1px;height:23px;background:#e4e6ea;"></div>
<div style="position:absolute;left:1276px;top:214px;width:1px;height:23px;background:#e4e6ea;"></div>
<div style="position:absolute;left:1292px;top:214px;width:1px;height:23px;background:#e4e6ea;"></div>
<div style="position:absolute;left:1309px;top:214px;width:1px;height:23px;background:#e4e6ea;"></div>
<div style="position:absolute;left:1326px;top:214px;width:1px;height:23px;background:#e4e6ea;"></div>
<div class="t" style="left:1332px;top:218.84px;font-size:12px;letter-spacing:-1.335px;color:#222;">Ma</div>
<div class="t" style="left:1057.4px;top:240.84px;font-size:12px;letter-spacing:-0.733px;color:#383838;">EXISTING FLOOR-PLAN</div>
<div style="position:absolute;left:1049px;top:255px;width:297px;height:1px;background:#e9ebef;"></div>
<svg style="position:absolute;left:1278.5px;top:240px" width="10" height="12" viewBox="0 0 10 12"><path d="M5 0.8 C2.3 0.8 0.9 2.7 0.9 4.6 C0.9 6.3 2.4 7.2 3 8.5 L3 9.5 L7 9.5 L7 8.5 C7.6 7.2 9.1 6.3 9.1 4.6 C9.1 2.7 7.7 0.8 5 0.8 Z" fill="#ffe27a" stroke="#5a4300" stroke-width="1"/><path d="M3.2 10.3 H6.8 M3.6 11.3 H6.4" stroke="#5a4300" stroke-width="0.9"/></svg>
<svg style="position:absolute;left:1295px;top:239.5px" width="13" height="12" viewBox="0 0 13 12"><path d="M6.5 5.5 V3.3 C6.5 1.6 7.6 0.8 8.8 0.8 C10 0.8 11.1 1.6 11.1 3.3 V4.5" fill="none" stroke="#222" stroke-width="1.1"/><rect x="0.8" y="5.3" width="8.4" height="6" fill="#f7e04a" stroke="#4a3a00" stroke-width="0.9"/></svg>
<div style="position:absolute;left:1312px;top:240px;width:12px;height:12px;background:#000000;border:1px solid #222;box-sizing:border-box;"></div>
<div class="t" style="left:1057.4px;top:259.84px;font-size:12px;letter-spacing:-0.004px;color:#383838;">internal_polygon</div>
<div style="position:absolute;left:1049px;top:274px;width:297px;height:1px;background:#e9ebef;"></div>
<svg style="position:absolute;left:1278.5px;top:259px" width="10" height="12" viewBox="0 0 10 12"><path d="M5 0.8 C2.3 0.8 0.9 2.7 0.9 4.6 C0.9 6.3 2.4 7.2 3 8.5 L3 9.5 L7 9.5 L7 8.5 C7.6 7.2 9.1 6.3 9.1 4.6 C9.1 2.7 7.7 0.8 5 0.8 Z" fill="#ffe27a" stroke="#5a4300" stroke-width="1"/><path d="M3.2 10.3 H6.8 M3.6 11.3 H6.4" stroke="#5a4300" stroke-width="0.9"/></svg>
<svg style="position:absolute;left:1295px;top:258.5px" width="13" height="12" viewBox="0 0 13 12"><path d="M6.5 5.5 V3.3 C6.5 1.6 7.6 0.8 8.8 0.8 C10 0.8 11.1 1.6 11.1 3.3 V4.5" fill="none" stroke="#222" stroke-width="1.1"/><rect x="0.8" y="5.3" width="8.4" height="6" fill="#f7e04a" stroke="#4a3a00" stroke-width="0.9"/></svg>
<div style="position:absolute;left:1312px;top:259px;width:12px;height:12px;background:#ffffff;border:1px solid #222;box-sizing:border-box;"></div>
<div class="t" style="left:1057.4px;top:278.84px;font-size:12px;letter-spacing:-0.176px;color:#383838;">door_external</div>
<div style="position:absolute;left:1049px;top:293px;width:297px;height:1px;background:#e9ebef;"></div>
<svg style="position:absolute;left:1278.5px;top:278px" width="10" height="12" viewBox="0 0 10 12"><path d="M5 0.8 C2.3 0.8 0.9 2.7 0.9 4.6 C0.9 6.3 2.4 7.2 3 8.5 L3 9.5 L7 9.5 L7 8.5 C7.6 7.2 9.1 6.3 9.1 4.6 C9.1 2.7 7.7 0.8 5 0.8 Z" fill="#ffe27a" stroke="#5a4300" stroke-width="1"/><path d="M3.2 10.3 H6.8 M3.6 11.3 H6.4" stroke="#5a4300" stroke-width="0.9"/></svg>
<svg style="position:absolute;left:1295px;top:277.5px" width="13" height="12" viewBox="0 0 13 12"><path d="M6.5 5.5 V3.3 C6.5 1.6 7.6 0.8 8.8 0.8 C10 0.8 11.1 1.6 11.1 3.3 V4.5" fill="none" stroke="#222" stroke-width="1.1"/><rect x="0.8" y="5.3" width="8.4" height="6" fill="#f7e04a" stroke="#4a3a00" stroke-width="0.9"/></svg>
<div style="position:absolute;left:1312px;top:278px;width:12px;height:12px;background:#0a6a0a;border:1px solid #222;box-sizing:border-box;"></div>
<div class="t" style="left:1057.4px;top:297.84px;font-size:12px;letter-spacing:-0.092px;color:#383838;">window_external</div>
<div style="position:absolute;left:1049px;top:312px;width:297px;height:1px;background:#e9ebef;"></div>
<svg style="position:absolute;left:1278.5px;top:297px" width="10" height="12" viewBox="0 0 10 12"><path d="M5 0.8 C2.3 0.8 0.9 2.7 0.9 4.6 C0.9 6.3 2.4 7.2 3 8.5 L3 9.5 L7 9.5 L7 8.5 C7.6 7.2 9.1 6.3 9.1 4.6 C9.1 2.7 7.7 0.8 5 0.8 Z" fill="#ffe27a" stroke="#5a4300" stroke-width="1"/><path d="M3.2 10.3 H6.8 M3.6 11.3 H6.4" stroke="#5a4300" stroke-width="0.9"/></svg>
<svg style="position:absolute;left:1295px;top:296.5px" width="13" height="12" viewBox="0 0 13 12"><path d="M6.5 5.5 V3.3 C6.5 1.6 7.6 0.8 8.8 0.8 C10 0.8 11.1 1.6 11.1 3.3 V4.5" fill="none" stroke="#222" stroke-width="1.1"/><rect x="0.8" y="5.3" width="8.4" height="6" fill="#f7e04a" stroke="#4a3a00" stroke-width="0.9"/></svg>
<div style="position:absolute;left:1312px;top:297px;width:12px;height:12px;background:#1111ee;border:1px solid #222;box-sizing:border-box;"></div>
<div class="t" style="left:1057.4px;top:316.84px;font-size:12px;letter-spacing:-0.173px;color:#383838;">entrance_primary</div>
<div style="position:absolute;left:1049px;top:331px;width:297px;height:1px;background:#e9ebef;"></div>
<svg style="position:absolute;left:1278.5px;top:316px" width="10" height="12" viewBox="0 0 10 12"><path d="M5 0.8 C2.3 0.8 0.9 2.7 0.9 4.6 C0.9 6.3 2.4 7.2 3 8.5 L3 9.5 L7 9.5 L7 8.5 C7.6 7.2 9.1 6.3 9.1 4.6 C9.1 2.7 7.7 0.8 5 0.8 Z" fill="#ffe27a" stroke="#5a4300" stroke-width="1"/><path d="M3.2 10.3 H6.8 M3.6 11.3 H6.4" stroke="#5a4300" stroke-width="0.9"/></svg>
<svg style="position:absolute;left:1295px;top:315.5px" width="13" height="12" viewBox="0 0 13 12"><path d="M6.5 5.5 V3.3 C6.5 1.6 7.6 0.8 8.8 0.8 C10 0.8 11.1 1.6 11.1 3.3 V4.5" fill="none" stroke="#222" stroke-width="1.1"/><rect x="0.8" y="5.3" width="8.4" height="6" fill="#f7e04a" stroke="#4a3a00" stroke-width="0.9"/></svg>
<div style="position:absolute;left:1312px;top:316px;width:12px;height:12px;background:#ff22ff;border:1px solid #222;box-sizing:border-box;"></div>
<div class="t" style="left:1057.4px;top:335.84px;font-size:12px;letter-spacing:0.039px;color:#383838;">window_skylight</div>
<div style="position:absolute;left:1049px;top:350px;width:297px;height:1px;background:#e9ebef;"></div>
<svg style="position:absolute;left:1278.5px;top:335px" width="10" height="12" viewBox="0 0 10 12"><path d="M5 0.8 C2.3 0.8 0.9 2.7 0.9 4.6 C0.9 6.3 2.4 7.2 3 8.5 L3 9.5 L7 9.5 L7 8.5 C7.6 7.2 9.1 6.3 9.1 4.6 C9.1 2.7 7.7 0.8 5 0.8 Z" fill="#ffe27a" stroke="#5a4300" stroke-width="1"/><path d="M3.2 10.3 H6.8 M3.6 11.3 H6.4" stroke="#5a4300" stroke-width="0.9"/></svg>
<svg style="position:absolute;left:1295px;top:334.5px" width="13" height="12" viewBox="0 0 13 12"><path d="M6.5 5.5 V3.3 C6.5 1.6 7.6 0.8 8.8 0.8 C10 0.8 11.1 1.6 11.1 3.3 V4.5" fill="none" stroke="#222" stroke-width="1.1"/><rect x="0.8" y="5.3" width="8.4" height="6" fill="#f7e04a" stroke="#4a3a00" stroke-width="0.9"/></svg>
<div style="position:absolute;left:1312px;top:335px;width:12px;height:12px;background:#1111ee;border:1px solid #222;box-sizing:border-box;"></div>
<div class="t" style="left:1057.4px;top:354.84px;font-size:12px;letter-spacing:-0.173px;color:#383838;">wall_external_structural</div>
<div style="position:absolute;left:1049px;top:369px;width:297px;height:1px;background:#e9ebef;"></div>
<svg style="position:absolute;left:1278.5px;top:354px" width="10" height="12" viewBox="0 0 10 12"><path d="M5 0.8 C2.3 0.8 0.9 2.7 0.9 4.6 C0.9 6.3 2.4 7.2 3 8.5 L3 9.5 L7 9.5 L7 8.5 C7.6 7.2 9.1 6.3 9.1 4.6 C9.1 2.7 7.7 0.8 5 0.8 Z" fill="#ffe27a" stroke="#5a4300" stroke-width="1"/><path d="M3.2 10.3 H6.8 M3.6 11.3 H6.4" stroke="#5a4300" stroke-width="0.9"/></svg>
<svg style="position:absolute;left:1295px;top:353.5px" width="13" height="12" viewBox="0 0 13 12"><path d="M6.5 5.5 V3.3 C6.5 1.6 7.6 0.8 8.8 0.8 C10 0.8 11.1 1.6 11.1 3.3 V4.5" fill="none" stroke="#222" stroke-width="1.1"/><rect x="0.8" y="5.3" width="8.4" height="6" fill="#f7e04a" stroke="#4a3a00" stroke-width="0.9"/></svg>
<div style="position:absolute;left:1312px;top:354px;width:12px;height:12px;background:#ff1a00;border:1px solid #222;box-sizing:border-box;"></div>
<div class="t" style="left:1057.4px;top:373.84px;font-size:12px;letter-spacing:-0.101px;color:#383838;">wall_internal_structural</div>
<div style="position:absolute;left:1049px;top:388px;width:297px;height:1px;background:#e9ebef;"></div>
<svg style="position:absolute;left:1278.5px;top:373px" width="10" height="12" viewBox="0 0 10 12"><path d="M5 0.8 C2.3 0.8 0.9 2.7 0.9 4.6 C0.9 6.3 2.4 7.2 3 8.5 L3 9.5 L7 9.5 L7 8.5 C7.6 7.2 9.1 6.3 9.1 4.6 C9.1 2.7 7.7 0.8 5 0.8 Z" fill="#ffe27a" stroke="#5a4300" stroke-width="1"/><path d="M3.2 10.3 H6.8 M3.6 11.3 H6.4" stroke="#5a4300" stroke-width="0.9"/></svg>
<svg style="position:absolute;left:1295px;top:372.5px" width="13" height="12" viewBox="0 0 13 12"><path d="M6.5 5.5 V3.3 C6.5 1.6 7.6 0.8 8.8 0.8 C10 0.8 11.1 1.6 11.1 3.3 V4.5" fill="none" stroke="#222" stroke-width="1.1"/><rect x="0.8" y="5.3" width="8.4" height="6" fill="#f7e04a" stroke="#4a3a00" stroke-width="0.9"/></svg>
<div style="position:absolute;left:1312px;top:373px;width:12px;height:12px;background:#b84a3c;border:1px solid #222;box-sizing:border-box;"></div>
<div class="t" style="left:1057.4px;top:392.84px;font-size:12px;letter-spacing:0.084px;color:#383838;">door_outdoor</div>
<div style="position:absolute;left:1049px;top:407px;width:297px;height:1px;background:#e9ebef;"></div>
<svg style="position:absolute;left:1278.5px;top:392px" width="10" height="12" viewBox="0 0 10 12"><path d="M5 0.8 C2.3 0.8 0.9 2.7 0.9 4.6 C0.9 6.3 2.4 7.2 3 8.5 L3 9.5 L7 9.5 L7 8.5 C7.6 7.2 9.1 6.3 9.1 4.6 C9.1 2.7 7.7 0.8 5 0.8 Z" fill="#ffe27a" stroke="#5a4300" stroke-width="1"/><path d="M3.2 10.3 H6.8 M3.6 11.3 H6.4" stroke="#5a4300" stroke-width="0.9"/></svg>
<svg style="position:absolute;left:1295px;top:391.5px" width="13" height="12" viewBox="0 0 13 12"><path d="M6.5 5.5 V3.3 C6.5 1.6 7.6 0.8 8.8 0.8 C10 0.8 11.1 1.6 11.1 3.3 V4.5" fill="none" stroke="#222" stroke-width="1.1"/><rect x="0.8" y="5.3" width="8.4" height="6" fill="#f7e04a" stroke="#4a3a00" stroke-width="0.9"/></svg>
<div style="position:absolute;left:1312px;top:392px;width:12px;height:12px;background:#ff8000;border:1px solid #222;box-sizing:border-box;"></div>
<div style="position:absolute;left:1049px;top:407px;width:297px;height:19px;background:#7b9ff0;"></div>
<div class="t" style="left:1057.3px;top:411.84px;font-size:12px;font-weight:bold;letter-spacing:-0.063px;color:#1a1a1a;">decorative</div>
<svg style="position:absolute;left:1260px;top:412px;" width="14" height="11" viewBox="0 0 14 11"><path d="M1 6 L4.5 9.5 L13 1" fill="none" stroke="#111" stroke-width="1.3"/></svg>
<div style="position:absolute;left:1312px;top:410px;width:12px;height:12px;background:#6b6b6b;border:1px solid #444;box-sizing:border-box;"></div>
<div style="position:absolute;left:1330px;top:409px;width:15px;height:15px;background:#fff;border-radius:50%;"></div>
<svg style="position:absolute;left:1058px;top:161px;" width="16" height="16" viewBox="0 0 16 16"><circle cx="8" cy="8" r="6" fill="none" stroke="url(#cw)" stroke-width="3.5"/><defs><linearGradient id="cw" x1="0" y1="0" x2="1" y2="1"><stop offset="0" stop-color="#ff3030"/><stop offset="0.35" stop-color="#ffd020"/><stop offset="0.6" stop-color="#30c030"/><stop offset="1" stop-color="#2040ff"/></linearGradient></defs></svg>
<svg style="position:absolute;left:1097px;top:160px;" width="17" height="18" viewBox="0 0 17 18"><path d="M1 3 L12 1 L16 5 L16 12 L6 17 L1 12 Z" fill="#1f3a8c"/><path d="M1 3 L12 1 L16 5 L6 9 Z" fill="#ff5a10"/><path d="M1 3 L6 9 L6 13 L1 8 Z" fill="#ff8040"/><path d="M1 8 L6 13 L16 9 L16 11 L6 15 L1 10 Z" fill="#f0f0f0"/></svg>
<svg style="position:absolute;left:1137px;top:160px;" width="18" height="17" viewBox="0 0 18 17"><circle cx="8" cy="9.5" r="6.8" fill="#2a5ed8" stroke="#10245a" stroke-width="1"/><circle cx="6" cy="7" r="2.2" fill="#a8c4ff"/><path d="M11 3 L15 1 L17 4" fill="none" stroke="#444" stroke-width="1.2"/></svg>
<svg style="position:absolute;left:1179px;top:161px;" width="15" height="16" viewBox="0 0 15 16"><path d="M2 14 L1 12 L10 2 L13 4 L4 14 Z" fill="#f0f0f0" stroke="#555" stroke-width="1"/><path d="M8 4 L11 7 L13.5 4 L11 1.5 Z" fill="#ff7a5a"/></svg>
<svg style="position:absolute;left:1218px;top:163px;" width="16" height="12" viewBox="0 0 16 12"><path d="M1 2 H6 L7 3.5 H13 V11 H1 Z" fill="#e0a010" stroke="#7a5a00" stroke-width="0.8"/><path d="M2.5 5.5 H15.5 L13 11 H1 Z" fill="#ffd040" stroke="#7a5a00" stroke-width="0.8"/></svg>
<svg style="position:absolute;left:1258px;top:161px;" width="16" height="16" viewBox="0 0 16 16"><rect x="0.5" y="0.5" width="15" height="15" fill="#dde4f0" stroke="#555"/><rect x="1" y="1" width="14" height="2.5" fill="#3a5fb0"/><circle cx="8" cy="9.5" r="4.8" fill="#2e56c8"/><text x="8" y="12.5" font-size="8" font-weight="bold" text-anchor="middle" fill="#fff" font-family="Liberation Sans">?</text></svg>
<svg style="position:absolute;left:1297px;top:160px;" width="17" height="17" viewBox="0 0 17 17"><path d="M8.5 1.5 C5 1.5 3.5 4.5 3.5 8 L3.5 12 L1.5 14 L15.5 14 L13.5 12 L13.5 8 C13.5 4.5 12 1.5 8.5 1.5 Z" fill="#1e6cff" stroke="#111" stroke-width="1"/><circle cx="8.5" cy="15.3" r="1.5" fill="#111"/></svg>
<svg style="position:absolute;left:1334px;top:161px;" width="15" height="15" viewBox="0 0 15 15"><circle cx="7.5" cy="7.5" r="5.5" fill="none" stroke="#d5d9e0" stroke-width="2" stroke-dasharray="2.2 1.4"/><circle cx="7.5" cy="7.5" r="2.2" fill="none" stroke="#d5d9e0" stroke-width="1.2"/></svg>
<svg style="position:absolute;left:1059px;top:189px;" width="12" height="14" viewBox="0 0 12 14"><path d="M1.5 0.5 H8 L11 3.5 V13.5 H1.5 Z" fill="#f2f2f2" stroke="#222" stroke-width="1"/><path d="M8 0.5 V3.5 H11" fill="none" stroke="#222" stroke-width="0.8"/></svg>
<svg style="position:absolute;left:1081px;top:189px;" width="14" height="15" viewBox="0 0 14 15"><path d="M0.5 0.5 H6 L8 2.5 V9.5 H0.5 Z" fill="#f2f2f2" stroke="#222"/><path d="M4.5 4.5 H10 L13 7.5 V14.5 H4.5 Z" fill="#f2f2f2" stroke="#222"/></svg>
<svg style="position:absolute;left:1104px;top:189px;" width="15" height="15" viewBox="0 0 15 15"><path d="M2 2 L13 13 M13 2 L2 13" stroke="#e62a10" stroke-width="2.4"/></svg>
<svg style="position:absolute;left:1127px;top:192px;" width="15" height="9" viewBox="0 0 15 9"><path d="M0.5 8.5 L7.5 0.8 L14.5 8.5 Z" fill="#7fa6f0" stroke="#1c3c8c" stroke-width="1"/></svg>
<svg style="position:absolute;left:1149px;top:192px;" width="15" height="9" viewBox="0 0 15 9"><path d="M0.5 0.5 L7.5 8.2 L14.5 0.5 Z" fill="#b8bcc4"/></svg>
<svg style="position:absolute;left:1174px;top:190px;" width="9" height="13" viewBox="0 0 9 13"><path d="M8.5 0.5 L0.5 6.5 L8.5 12.5 Z" fill="#b0b4bc"/></svg>
<svg style="position:absolute;left:1195px;top:189px;" width="16" height="16" viewBox="0 0 16 16"><path d="M0.5 1 H14 L8.8 7 V13 L5.8 15 V7 Z" fill="#2e62d8" stroke="#10306a" stroke-width="0.8"/><path d="M12 12 L15 12 L15 15 Z" fill="#111"/></svg>
<svg style="position:absolute;left:1219px;top:189px;" width="14" height="15" viewBox="0 0 14 15"><path d="M1 0.5 H7.5 L10.5 3.5 V13.5 H1 Z" fill="#ccced2" stroke="#9a9ca0"/><path d="M10 12 L13 12 L13 15 Z" fill="#999"/></svg>
<svg style="position:absolute;left:1240px;top:189px;" width="16" height="16" viewBox="0 0 16 16"><path d="M1.5 14 L9 6.5" stroke="#1e3f8a" stroke-width="2.6"/><path d="M6 4 L9.5 1 L13 3.5 L11.5 5 L13.5 7.5 L11.5 9 L9 7 Z" fill="#222"/><path d="M12.5 12.5 L15.5 12.5 L15.5 15.5 Z" fill="#111"/></svg>
<svg style="position:absolute;left:1262px;top:189px;" width="16" height="16" viewBox="0 0 16 16"><circle cx="8" cy="8" r="7.3" fill="#2e56c8"/><circle cx="6" cy="5" r="3" fill="#6a90e8" opacity="0.7"/><text x="8" y="12.3" font-size="11" font-weight="bold" text-anchor="middle" fill="#fff" font-family="Liberation Sans">?</text></svg>
<svg style="position:absolute;left:0;top:0" width="1351" height="905" viewBox="0 0 1351 905"><path d="M449.5,229.5 H476.5 V208.5 H488.5" fill="none" stroke="#5d6165" stroke-width="1.0" /><path d="M449.5,231.5 H479.5 V211.5 H488.5" fill="none" stroke="#5d6165" stroke-width="1.0" /><path d="M481.5,237.5 V383" fill="none" stroke="#5d6165" stroke-width="1.0" /><path d="M477.5,237.5 H484.5" fill="none" stroke="#5d6165" stroke-width="1.0" /><path d="M484.5,321.5 H549.5 V382.5 H477.5" fill="none" stroke="#5d6165" stroke-width="1.0" /><path d="M484.5,317.5 V382.5" fill="none" stroke="#5d6165" stroke-width="1.0" /><path d="M493.5,211.5 H539.5" fill="none" stroke="#5d6165" stroke-width="1.0" /><path d="M484.5,217.5 H547.5" fill="none" stroke="#5d6165" stroke-width="1.0" /><path d="M544.5,208.5 H553.5 V229.5 H572.5" fill="none" stroke="#5d6165" stroke-width="1.0" /><path d="M544.5,211.5 H556.5 V232.5 H572.5" fill="none" stroke="#5d6165" stroke-width="1.0" /><path d="M576.5,238.5 H720.5" fill="none" stroke="#5d6165" stroke-width="1.0" /><path d="M616.5,229.5 H663.5" fill="none" stroke="#5d6165" stroke-width="1.0" /><path d="M616.5,232.5 H663.5" fill="none" stroke="#5d6165" stroke-width="1.0" /><path d="M698.5,229.5 H728.5 V243.5" fill="none" stroke="#5d6165" stroke-width="1.0" /><path d="M698.5,232.5 H725.5 V240.5" fill="none" stroke="#5d6165" stroke-width="1.0" /><path d="M725.5,268 V280.5 H743.5" fill="none" stroke="#5d6165" stroke-width="1.0" /><path d="M728.5,268 V277.5 H743.5" fill="none" stroke="#5d6165" stroke-width="1.0" /><path d="M731.5,225.5 H800.5" fill="none" stroke="#5d6165" stroke-width="1.0" /><path d="M806.5,237.5 V272" fill="none" stroke="#5d6165" stroke-width="1.0" /><path d="M812.5,237.5 V272" fill="none" stroke="#5d6165" stroke-width="1.0" /><path d="M785.5,277.5 H807.5 V316.5 H821.5 V359.5 H807.5 V387.5 H846" fill="none" stroke="#5d6165" stroke-width="1.0" /><path d="M785.5,280.5 H810.5 V318.5 H823.5 V357.5 H810.5 V390.5 H846" fill="none" stroke="#5d6165" stroke-width="1.0" /><path d="M846,557.5 H807.5 V586.5 H821.5 V627.5 H807.5 V647.5 H790" fill="none" stroke="#5d6165" stroke-width="1.0" /><path d="M846,560.5 H810.5 V588.5 H823.5 V625.5 H810.5 V651.5 H790" fill="none" stroke="#5d6165" stroke-width="1.0" /><path d="M689.5,708.5 H799.5" fill="none" stroke="#5d6165" stroke-width="1.0" /><path d="M689.5,710.5 H799.5" fill="none" stroke="#5d6165" stroke-width="1.0" /><path d="M689.5,715.5 H799.5" fill="none" stroke="#5d6165" stroke-width="1.0" /><path d="M806.5,658.5 V702.5" fill="none" stroke="#5d6165" stroke-width="1.0" /><path d="M808.5,658.5 V702.5" fill="none" stroke="#5d6165" stroke-width="1.0" /><path d="M812.5,658.5 V702.5" fill="none" stroke="#5d6165" stroke-width="1.0" /><path d="M682.5,649.5 H694.5" fill="none" stroke="#5d6165" stroke-width="1.0" /><path d="M682.5,649.5 V661.5" fill="none" stroke="#5d6165" stroke-width="1.0" /><path d="M684.5,652.5 H694.5" fill="none" stroke="#5d6165" stroke-width="1.0" /><path d="M684.5,652.5 V660.5" fill="none" stroke="#5d6165" stroke-width="1.0" /><path d="M682.5,690 V708.5 H670" fill="none" stroke="#5d6165" stroke-width="1.0" /><path d="M684.5,690 V704.5" fill="none" stroke="#5d6165" stroke-width="1.0" /><path d="M298.5,709.5 H389.5" fill="none" stroke="#5d6165" stroke-width="1.0" /><path d="M286.5,709.5 V717.5 H298.5" fill="none" stroke="#5d6165" stroke-width="1.0" /><path d="M418.5,708.5 H456" fill="none" stroke="#5d6165" stroke-width="1.0" /><path d="M389.5,711.5 H424.5 V714.5 H456" fill="none" stroke="#5d6165" stroke-width="1.0" /><path d="M456,702.5 H676.5" fill="none" stroke="#5d6165" stroke-width="1.0" /><path d="M548.5,706.5 H585.5" fill="none" stroke="#5d6165" stroke-width="1.0" /><path d="M548.5,711.5 H585.5" fill="none" stroke="#5d6165" stroke-width="1.0" /><path d="M651.5,711.5 H676.5 V690" fill="none" stroke="#5d6165" stroke-width="1.0" /><path d="M655,707.5 H672.5" fill="none" stroke="#5d6165" stroke-width="1.0" /><path d="M802.5,323.5 H815.5 V350.5 H802.5 Z" fill="none" stroke="#5d6165" stroke-width="1.0" /><path d="M802.5,593.5 H815.5 V621.5 H802.5 Z" fill="none" stroke="#5d6165" stroke-width="1.0" /><path d="M731.5,230.5 H800.5" stroke="#5d6165" stroke-width="2" fill="none"/><circle cx="811.5" cy="333" r="1.6" fill="none" stroke="#5d6165" stroke-width="0.9"/><circle cx="811.5" cy="346" r="1.6" fill="none" stroke="#5d6165" stroke-width="0.9"/><circle cx="811.5" cy="598" r="1.6" fill="none" stroke="#5d6165" stroke-width="0.9"/><circle cx="811.5" cy="602" r="1.6" fill="none" stroke="#5d6165" stroke-width="0.9"/><circle cx="811.5" cy="616" r="1.6" fill="none" stroke="#5d6165" stroke-width="0.9"/><rect x="800.5" y="225.5" width="12.0" height="12.0" rx="2" fill="none" stroke="#5d6165" stroke-width="1.2"/><rect x="799.5" y="702.5" width="14.0" height="14.0" rx="2" fill="none" stroke="#5d6165" stroke-width="1.2"/><path d="M729,243.5 H750.5 A21.5,21.5 0 0 1 729,265" fill="none" stroke="#5d6165" stroke-width="1.0" /><path d="M743.5,277.5 V258.5 A19,19 0 0 1 762.5,277.5" fill="none" stroke="#5d6165" stroke-width="1.0" /><path d="M782.5,277.5 V258.5 A20,19 0 0 0 762.5,277.5" fill="none" stroke="#5d6165" stroke-width="1.0" /><path d="M696,649 V632 A17,17 0 0 1 713,649" fill="none" stroke="#5d6165" stroke-width="1.0" /><path d="M789,649 V632 A17,17 0 0 0 772,649" fill="none" stroke="#5d6165" stroke-width="1.0" /><path d="M717.5,656.5 V677.5 A24,21 0 0 0 741.5,656.5" fill="none" stroke="#5d6165" stroke-width="1.0" /><path d="M766.5,656.5 V677.5 A25,21 0 0 1 741.5,656.5" fill="none" stroke="#5d6165" stroke-width="1.0" /><path d="M686,665.5 H708.5 A22.5,21 0 0 1 686,686.5" fill="none" stroke="#5d6165" stroke-width="1.0" /><path d="M488.5,214.5 H544.5" fill="none" stroke="#ffffff" stroke-width="1.4" /><path d="M578.5,232.5 H616.5" fill="none" stroke="#ffffff" stroke-width="1.4" /><path d="M663.5,232.5 H698.5" fill="none" stroke="#ffffff" stroke-width="1.4" /><path d="M726.5,243.5 V265" fill="none" stroke="#ffffff" stroke-width="1.4" /><path d="M743.5,280.5 H782.5" fill="none" stroke="#ffffff" stroke-width="1.4" /><path d="M695.5,649.5 H789.5" fill="none" stroke="#ffffff" stroke-width="1.4" /><path d="M684.5,665.5 V686" fill="none" stroke="#ffffff" stroke-width="1.4" /><path d="M300.5,714.5 H389.5" fill="none" stroke="#ffffff" stroke-width="1.4" /><path d="M457,708.5 H546.5" fill="none" stroke="#ffffff" stroke-width="1.4" /><path d="M586.5,708.5 H651.5" fill="none" stroke="#ffffff" stroke-width="1.4" /><path d="M508.5,459.5 V486.5" fill="none" stroke="#ffffff" stroke-width="1.4" /><path d="M493.5,209.5 H539.5" fill="none" stroke="#1020f8" stroke-width="1.4" /><path d="M578.5,229.5 H594.5" fill="none" stroke="#1020f8" stroke-width="1.4" /><path d="M599.5,229.5 H616.5" fill="none" stroke="#1020f8" stroke-width="1.4" /><path d="M663.5,229.5 H696.5" fill="none" stroke="#1020f8" stroke-width="1.4" /><path d="M300.5,717.5 H389.5" fill="none" stroke="#1020f8" stroke-width="1.4" /><path d="M457,710.5 H546.5" fill="none" stroke="#1020f8" stroke-width="1.4" /><path d="M586.5,710.5 H651.5" fill="none" stroke="#1020f8" stroke-width="1.4" /><path d="M728.5,245 V263" fill="none" stroke="#0a7a0a" stroke-width="1.3" stroke-dasharray="3 1"/><path d="M745,277.5 H781" fill="none" stroke="#0a7a0a" stroke-width="1.3" stroke-dasharray="3 1"/><path d="M697,652.5 H788" fill="none" stroke="#0a7a0a" stroke-width="1.3" stroke-dasharray="3 1"/><path d="M505.5,459.5 V486.5" fill="none" stroke="#0a7a0a" stroke-width="1.3" stroke-dasharray="3 1"/><path d="M686.5,667 V685" fill="none" stroke="#0a7a0a" stroke-width="1.3" stroke-dasharray="3 1"/><path d="M845.00,397.00 L868.10,400.56 L890.14,414.25 L906.83,434.82 L915.85,460.15 L915.85,487.05 L906.83,512.38 L890.14,532.95 L868.10,546.64 L845.00,550.50" fill="none" stroke="#ffffff" stroke-width="1.5" /><path d="M847.00,391.50 L870.58,394.55 L894.43,409.37 L912.49,431.63 L922.25,459.05 L922.25,488.15 L912.49,515.57 L894.43,537.83 L870.58,552.65 L847.00,556.00" fill="none" stroke="#5d6165" stroke-width="2.2" /><path d="M847.50,388.00 L871.53,392.24 L896.08,407.49 L914.67,430.40 L924.72,458.62 L924.72,488.58 L914.67,516.80 L896.08,539.71 L871.53,554.96 L847.50,559.50" fill="none" stroke="#1020f8" stroke-width="1.4" /><polygon points="862.83,398.93 866.10,388.38 870.86,386.01 876.87,388.49 878.12,393.33 873.00,403.12 868.49,399.64" fill="#8e9297" stroke="#ff2200" stroke-width="1.2"/><polygon points="885.68,411.00 892.19,402.07 897.46,401.38 902.34,405.67 901.95,410.65 893.94,418.26 890.80,413.50" fill="#8e9297" stroke="#ff2200" stroke-width="1.2"/><polygon points="903.69,430.27 912.78,424.00 917.99,425.09 921.18,430.75 919.16,435.33 909.09,439.86 907.70,434.33" fill="#8e9297" stroke="#ff2200" stroke-width="1.2"/><polygon points="914.42,454.82 925.09,451.96 929.63,454.73 930.73,461.13 927.30,464.77 916.29,465.66 916.83,459.98" fill="#8e9297" stroke="#ff2200" stroke-width="1.2"/><polygon points="916.29,481.54 927.30,482.43 930.65,486.56 929.54,492.96 925.09,495.24 914.42,492.38 916.83,487.22" fill="#8e9297" stroke="#ff2200" stroke-width="1.2"/><polygon points="909.09,507.34 919.16,511.87 920.93,516.89 917.74,522.55 912.78,523.20 903.69,516.93 907.70,512.87" fill="#8e9297" stroke="#ff2200" stroke-width="1.2"/><polygon points="893.94,528.94 901.95,536.55 901.96,541.86 897.08,546.15 892.19,545.13 885.68,536.20 890.80,533.70" fill="#8e9297" stroke="#ff2200" stroke-width="1.2"/><polygon points="873.00,544.08 878.12,553.87 876.40,558.90 870.39,561.38 866.10,558.82 862.83,548.27 868.49,547.56" fill="#8e9297" stroke="#ff2200" stroke-width="1.2"/><path d="M449.5,237.5 V226.5 H473.5 V206.5 H488.5" fill="none" stroke="#ff2200" stroke-width="1.25" /><path d="M488.5,205.5 H492.5 L493.5,207.5 V214.5 H488.5 Z" fill="none" stroke="#ff2200" stroke-width="1.25" /><path d="M488.5,214.5 V217.5 H484.5 V317.5 H556.5 V389.5 H547.5 V446.5 H477.5 V428.5 H484.5 V440.5 H542.5 V389.5 H484.5 V402.5 H477.5 V237.5 H449.5" fill="none" stroke="#ff2200" stroke-width="1.25" /><path d="M539.5,214.5 V207.5 L541.5,205.5 H544.5 V214.5 Z" fill="none" stroke="#ff2200" stroke-width="1.25" /><path d="M544.5,206.5 H559.5 V227.5 H572.5" fill="none" stroke="#ff2200" stroke-width="1.25" /><path d="M544.5,214.5 L547.5,217.5 V238.5 H576.5 V232.5" fill="none" stroke="#ff2200" stroke-width="1.25" /><path d="M572.5,225.5 H578.5 V232.5 H572.5 Z" fill="none" stroke="#ff2200" stroke-width="1.25" /><path d="M594.5,225.5 H599.5 V232.5 H594.5 Z" fill="none" stroke="#ff2200" stroke-width="1.25" /><path d="M616.5,238.5 V229.5 L618.5,225.5 H621.5 V226.5 H659.5 L661.5,225.5 L663.5,229.5 V238.5 Z" fill="none" stroke="#ff2200" stroke-width="1.25" /><path d="M698.5,238.5 V229.5 L696.5,227.5 L699.5,225.5 H719.5 V224.5 H731.5 V243.5 H726.5 V242.5 H720.5 V238.5 Z" fill="none" stroke="#ff2200" stroke-width="1.25" /><path d="M726.5,264.5 V267.5 H720.5 V286.5 H740.5 V283.5 H743.5 V277.5 H731.5 V264.5 Z" fill="none" stroke="#ff2200" stroke-width="1.25" /><path d="M783.5,280.5 V273.5 H801.5 V272.5 H813.5 V313.5 H825.5 V361.5 H813.5 V384.5 H838.5 L839.5,382.5 H845.5 L847.5,385.5 V397.5 H801.5 V286.5 H785.5 Z" fill="none" stroke="#ff2200" stroke-width="1.25" /><path d="M847.5,551.5 H801.5 V643.5 H790.5 V653.5 H794.5 V655.5 H800.5 V658.5 H813.5 V631.5 H825.5 V582.5 H813.5 V563.5 H838.5 L839.5,565.5 H845.5 L847.5,562.5 Z" fill="none" stroke="#ff2200" stroke-width="1.25" /><path d="M694.5,649.5 V642.5 H676.5 V662.5 H684.5 V665.5" fill="none" stroke="#ff2200" stroke-width="1.25" /><path d="M694.5,652.5 V656.5 H689.5 V662.5 H686.5" fill="none" stroke="#ff2200" stroke-width="1.25" /><path d="M713.5,649.5 H717.5 V656.5 H713.5 Z" fill="none" stroke="#ff2200" stroke-width="1.25" /><path d="M767.5,649.5 H771.5 V656.5 H767.5 Z" fill="none" stroke="#ff2200" stroke-width="1.25" /><path d="M684.5,686.5 V689.5 H676.5 V702.5 H651.5 V714.5 H675.5 V716.5 H689.5 V686.5 Z" fill="none" stroke="#ff2200" stroke-width="1.25" /><path d="M282.5,513.5 V720.5 H300.5 V714.5 H298.5 V709.5 H286.5 V517.5 H547.5 V500.5 H508.5 V486.5" fill="none" stroke="#ff2200" stroke-width="1.25" /><path d="M282.5,513.5 H505.5 V486.5" fill="none" stroke="#ff2200" stroke-width="1.25" /><path d="M505.5,459.5 V446.5" fill="none" stroke="#ff2200" stroke-width="1.25" /><path d="M508.5,459.5 V446.5" fill="none" stroke="#ff2200" stroke-width="1.25" /><path d="M324.5,714.5 H328.5 V720.5 H324.5 Z" fill="none" stroke="#ff2200" stroke-width="1.25" /><path d="M359.5,714.5 H363.5 V720.5 H359.5 Z" fill="none" stroke="#ff2200" stroke-width="1.25" /><path d="M389.5,714.5 V709.5 H418.5 V702.5 H456.5 V715.5 H430.5 V720.5 H389.5 Z" fill="none" stroke="#ff2200" stroke-width="1.25" /><path d="M482.5,708.5 H486.5 V714.5 H482.5 Z" fill="none" stroke="#ff2200" stroke-width="1.25" /><path d="M516.5,708.5 H520.5 V714.5 H516.5 Z" fill="none" stroke="#ff2200" stroke-width="1.25" /><path d="M602.5,708.5 H606.5 V714.5 H602.5 Z" fill="none" stroke="#ff2200" stroke-width="1.25" /><path d="M633.5,708.5 H637.5 V714.5 H633.5 Z" fill="none" stroke="#ff2200" stroke-width="1.25" /><path d="M546.5,714.5 V702.5 H586.5 V714.5 Z" fill="none" stroke="#ff2200" stroke-width="1.25" /><path d="M701.9,652.5 A2.5,2.5 0 0 0 706.9,652.5" fill="none" stroke="#ee9a30" stroke-width="1.0" /><path d="M751.6,652.5 A2.5,2.5 0 0 0 756.6,652.5" fill="none" stroke="#ee9a30" stroke-width="1.0" /><path d="M777.1,652.5 A2.5,2.5 0 0 0 782.1,652.5" fill="none" stroke="#ee9a30" stroke-width="1.0" /><path d="M687.5,672.5 A2.5,2.5 0 0 1 687.5,677.5" fill="none" stroke="#ee9a30" stroke-width="1.0" /><path d="M729.5,251.5 A2.5,2.5 0 0 1 729.5,256.5" fill="none" stroke="#ee9a30" stroke-width="1.0" /><path d="M764.5,277 A2.5,2.5 0 0 1 769.5,277" fill="none" stroke="#ee9a30" stroke-width="1.0" /><path d="M578.5,254.5 L615.5,274.5 M615.5,254.5 L578.5,274.5" stroke="#55595e" stroke-width="0.9"/><rect x="578.5" y="254.5" width="37.0" height="20.0" rx="0" fill="none" stroke="#1020f8" stroke-width="1.6"/><path d="M662.5,254.5 L698.5,274.5 M698.5,254.5 L662.5,274.5" stroke="#55595e" stroke-width="0.9"/><rect x="662.5" y="254.5" width="36.0" height="20.0" rx="0" fill="none" stroke="#1020f8" stroke-width="1.6"/><path d="M564.5,454.5 L646.5,492.5 M646.5,454.5 L564.5,492.5" stroke="#55595e" stroke-width="0.9"/><rect x="564.5" y="454.5" width="82.0" height="38.0" rx="0" fill="none" stroke="#1020f8" stroke-width="1.6"/><rect x="663.5" y="429.5" width="16.0" height="17.0" rx="0" fill="none" stroke="#5d6165" stroke-width="1.1"/><rect x="663.5" y="500.5" width="16.0" height="17.0" rx="0" fill="none" stroke="#5d6165" stroke-width="1.1"/><path d="M492,466 L492,480 L501,473 Z" fill="#6a6e72"/><circle cx="505.5" cy="473" r="2.2" fill="none" stroke="#ff30ff" stroke-width="1"/><path d="M102.5,771 V801.5 H131.5" fill="none" stroke="#505458" stroke-width="1.1" /></svg>
<div class="t" style="left:104.5px;top:759.84px;font-size:12px;color:#505458;">y</div>
<div class="t" style="left:134.5px;top:791.34px;font-size:12px;color:#505458;">x</div>
<div style="position:absolute;left:267px;top:54px;width:1px;height:1px;background:#222;"></div>
<div style="position:absolute;left:295px;top:54px;width:5px;height:1px;background:#222;"></div>
<div style="position:absolute;left:338px;top:54px;width:5px;height:1px;background:#222;"></div>
<svg style="position:absolute;left:893px;top:52px;" width="13" height="20" viewBox="0 0 13 20"><path d="M0.8,0.8 V16.8 L4.5,13.2 L7.6,19.2 L10.3,18 L7.4,12.2 L12,12.2 Z" fill="#fff" stroke="#000" stroke-width="1.1" stroke-linejoin="round"/></svg>
</body></html>
